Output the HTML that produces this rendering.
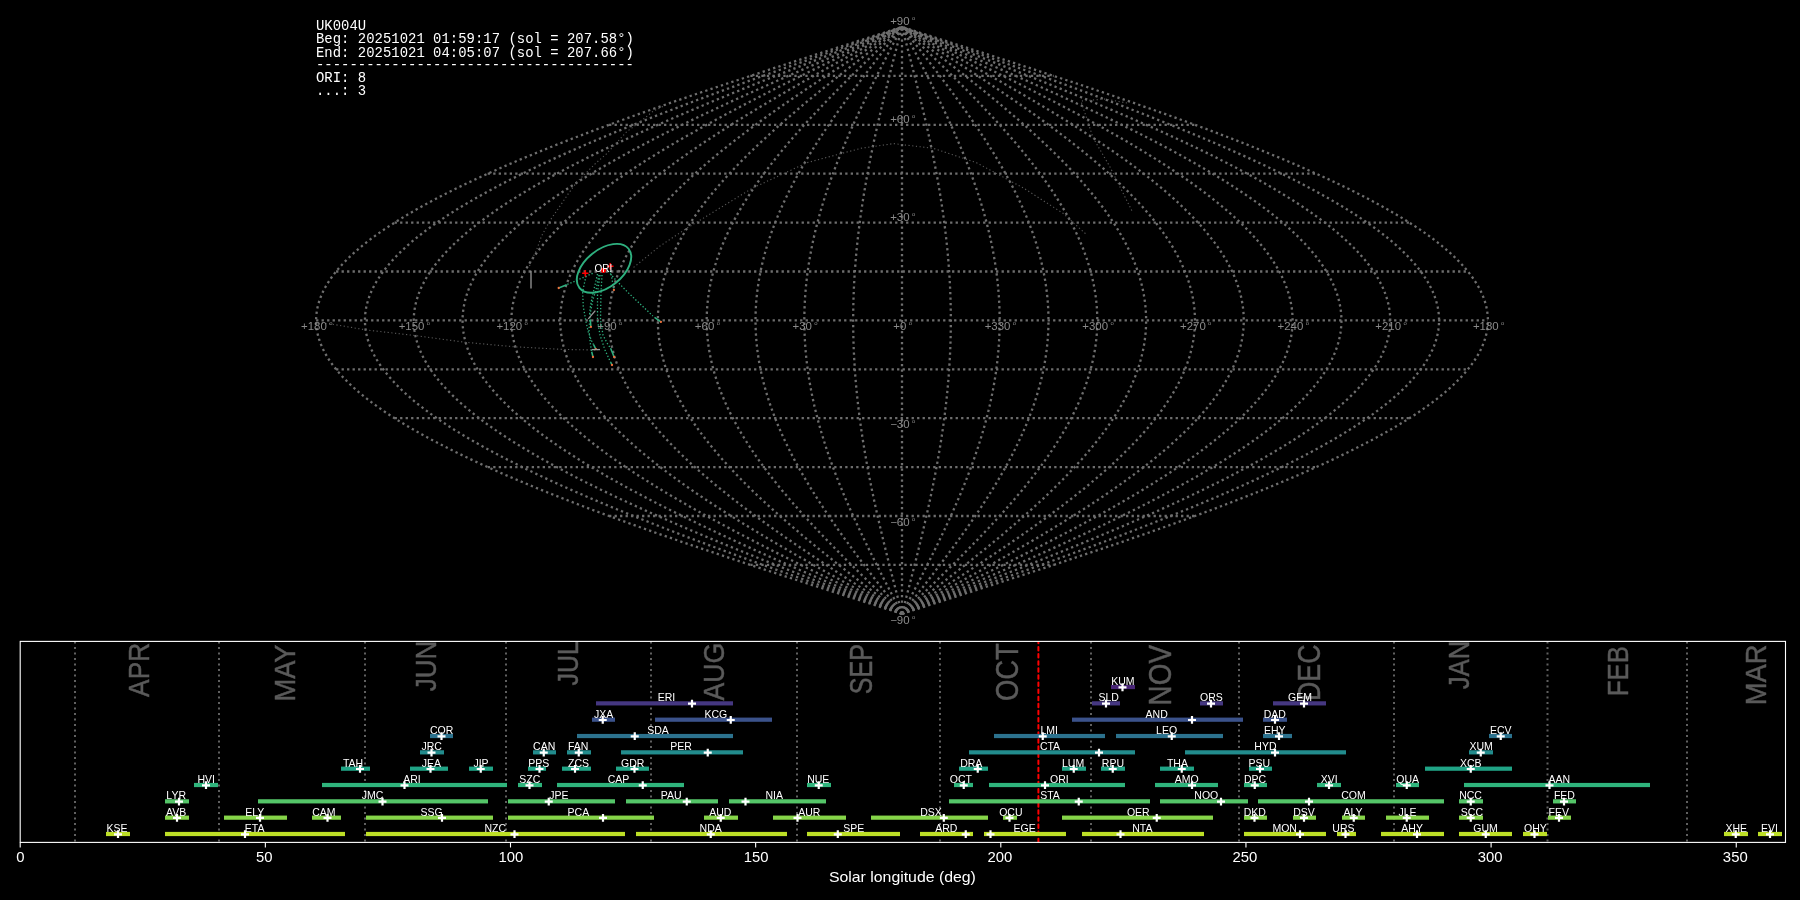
<!DOCTYPE html>
<html><head><meta charset="utf-8"><style>
html,body{margin:0;padding:0;background:#000;width:1800px;height:900px;overflow:hidden}
svg{display:block;will-change:transform}
text{font-family:"Liberation Sans",sans-serif}
.mono{font-family:"Liberation Mono",monospace}
</style></head><body>
<svg width="1800" height="900" viewBox="0 0 1800 900">
<rect width="1800" height="900" fill="#000"/>
<path d="M750.36 564.90H1053.64M609.05 516.00H1194.95M487.71 467.10H1316.29M394.60 418.20H1409.40M336.06 369.30H1467.94M316.10 320.40H1487.90M336.06 271.50H1467.94M394.60 222.60H1409.40M487.71 173.70H1316.29M609.05 124.80H1194.95M750.36 75.90H1053.64" stroke="#6e6e6e" stroke-width="2.3" stroke-dasharray="2.3 3.2" fill="none"/>
<path d="M902.00 613.80 L912.23 610.54 L922.45 607.28 L932.66 604.02 L942.87 600.76 L953.06 597.50 L963.24 594.24 L973.40 590.98 L983.54 587.72 L993.65 584.46 L1003.74 581.20 L1013.79 577.94 L1023.82 574.68 L1033.80 571.42 L1043.74 568.16 L1053.64 564.90 L1063.50 561.64 L1073.30 558.38 L1083.05 555.12 L1092.75 551.86 L1102.39 548.60 L1111.97 545.34 L1121.48 542.08 L1130.93 538.82 L1140.31 535.56 L1149.61 532.30 L1158.84 529.04 L1167.99 525.78 L1177.06 522.52 L1186.05 519.26 L1194.95 516.00 L1203.76 512.74 L1212.48 509.48 L1221.10 506.22 L1229.63 502.96 L1238.06 499.70 L1246.38 496.44 L1254.60 493.18 L1262.72 489.92 L1270.72 486.66 L1278.61 483.40 L1286.38 480.14 L1294.04 476.88 L1301.58 473.62 L1309.00 470.36 L1316.29 467.10 L1323.46 463.84 L1330.50 460.58 L1337.41 457.32 L1344.18 454.06 L1350.83 450.80 L1357.33 447.54 L1363.70 444.28 L1369.92 441.02 L1376.00 437.76 L1381.94 434.50 L1387.73 431.24 L1393.38 427.98 L1398.87 424.72 L1404.21 421.46 L1409.40 418.20 L1414.44 414.94 L1419.32 411.68 L1424.04 408.42 L1428.60 405.16 L1433.01 401.90 L1437.25 398.64 L1441.32 395.38 L1445.24 392.12 L1448.98 388.86 L1452.57 385.60 L1455.98 382.34 L1459.22 379.08 L1462.30 375.82 L1465.20 372.56 L1467.94 369.30 L1470.50 366.04 L1472.88 362.78 L1475.10 359.52 L1477.14 356.26 L1479.00 353.00 L1480.69 349.74 L1482.20 346.48 L1483.53 343.22 L1484.69 339.96 L1485.67 336.70 L1486.47 333.44 L1487.10 330.18 L1487.54 326.92 L1487.81 323.66 L1487.90 320.40 L1487.81 317.14 L1487.54 313.88 L1487.10 310.62 L1486.47 307.36 L1485.67 304.10 L1484.69 300.84 L1483.53 297.58 L1482.20 294.32 L1480.69 291.06 L1479.00 287.80 L1477.14 284.54 L1475.10 281.28 L1472.88 278.02 L1470.50 274.76 L1467.94 271.50 L1465.20 268.24 L1462.30 264.98 L1459.22 261.72 L1455.98 258.46 L1452.57 255.20 L1448.98 251.94 L1445.24 248.68 L1441.32 245.42 L1437.25 242.16 L1433.01 238.90 L1428.60 235.64 L1424.04 232.38 L1419.32 229.12 L1414.44 225.86 L1409.40 222.60 L1404.21 219.34 L1398.87 216.08 L1393.38 212.82 L1387.73 209.56 L1381.94 206.30 L1376.00 203.04 L1369.92 199.78 L1363.70 196.52 L1357.33 193.26 L1350.83 190.00 L1344.18 186.74 L1337.41 183.48 L1330.50 180.22 L1323.46 176.96 L1316.29 173.70 L1309.00 170.44 L1301.58 167.18 L1294.04 163.92 L1286.38 160.66 L1278.61 157.40 L1270.72 154.14 L1262.72 150.88 L1254.60 147.62 L1246.38 144.36 L1238.06 141.10 L1229.63 137.84 L1221.10 134.58 L1212.48 131.32 L1203.76 128.06 L1194.95 124.80 L1186.05 121.54 L1177.06 118.28 L1167.99 115.02 L1158.84 111.76 L1149.61 108.50 L1140.31 105.24 L1130.93 101.98 L1121.48 98.72 L1111.97 95.46 L1102.39 92.20 L1092.75 88.94 L1083.05 85.68 L1073.30 82.42 L1063.50 79.16 L1053.64 75.90 L1043.74 72.64 L1033.80 69.38 L1023.82 66.12 L1013.79 62.86 L1003.74 59.60 L993.65 56.34 L983.54 53.08 L973.40 49.82 L963.24 46.56 L953.06 43.30 L942.87 40.04 L932.66 36.78 L922.45 33.52 L912.23 30.26 L902.00 27.00" stroke="#6e6e6e" stroke-width="2.3" stroke-dasharray="2.3 3.2" fill="none"/>
<path d="M902.00 613.80 L911.37 610.54 L920.74 607.28 L930.11 604.02 L939.46 600.76 L948.81 597.50 L958.14 594.24 L967.45 590.98 L976.75 587.72 L986.02 584.46 L995.26 581.20 L1004.48 577.94 L1013.66 574.68 L1022.82 571.42 L1031.93 568.16 L1041.01 564.90 L1050.04 561.64 L1059.03 558.38 L1067.97 555.12 L1076.85 551.86 L1085.69 548.60 L1094.47 545.34 L1103.19 542.08 L1111.85 538.82 L1120.45 535.56 L1128.98 532.30 L1137.44 529.04 L1145.83 525.78 L1154.14 522.52 L1162.38 519.26 L1170.54 516.00 L1178.61 512.74 L1186.61 509.48 L1194.51 506.22 L1202.33 502.96 L1210.05 499.70 L1217.68 496.44 L1225.22 493.18 L1232.66 489.92 L1239.99 486.66 L1247.23 483.40 L1254.35 480.14 L1261.37 476.88 L1268.28 473.62 L1275.08 470.36 L1281.77 467.10 L1288.34 463.84 L1294.79 460.58 L1301.12 457.32 L1307.34 454.06 L1313.42 450.80 L1319.39 447.54 L1325.22 444.28 L1330.93 441.02 L1336.50 437.76 L1341.95 434.50 L1347.26 431.24 L1352.43 427.98 L1357.47 424.72 L1362.36 421.46 L1367.12 418.20 L1371.74 414.94 L1376.21 411.68 L1380.54 408.42 L1384.72 405.16 L1388.76 401.90 L1392.64 398.64 L1396.38 395.38 L1399.97 392.12 L1403.40 388.86 L1406.69 385.60 L1409.81 382.34 L1412.79 379.08 L1415.61 375.82 L1418.27 372.56 L1420.77 369.30 L1423.12 366.04 L1425.31 362.78 L1427.34 359.52 L1429.21 356.26 L1430.92 353.00 L1432.46 349.74 L1433.85 346.48 L1435.07 343.22 L1436.13 339.96 L1437.03 336.70 L1437.77 333.44 L1438.34 330.18 L1438.75 326.92 L1438.99 323.66 L1439.07 320.40 L1438.99 317.14 L1438.75 313.88 L1438.34 310.62 L1437.77 307.36 L1437.03 304.10 L1436.13 300.84 L1435.07 297.58 L1433.85 294.32 L1432.46 291.06 L1430.92 287.80 L1429.21 284.54 L1427.34 281.28 L1425.31 278.02 L1423.12 274.76 L1420.77 271.50 L1418.27 268.24 L1415.61 264.98 L1412.79 261.72 L1409.81 258.46 L1406.69 255.20 L1403.40 251.94 L1399.97 248.68 L1396.38 245.42 L1392.64 242.16 L1388.76 238.90 L1384.72 235.64 L1380.54 232.38 L1376.21 229.12 L1371.74 225.86 L1367.12 222.60 L1362.36 219.34 L1357.47 216.08 L1352.43 212.82 L1347.26 209.56 L1341.95 206.30 L1336.50 203.04 L1330.93 199.78 L1325.22 196.52 L1319.39 193.26 L1313.42 190.00 L1307.34 186.74 L1301.12 183.48 L1294.79 180.22 L1288.34 176.96 L1281.77 173.70 L1275.08 170.44 L1268.28 167.18 L1261.37 163.92 L1254.35 160.66 L1247.23 157.40 L1239.99 154.14 L1232.66 150.88 L1225.22 147.62 L1217.68 144.36 L1210.05 141.10 L1202.33 137.84 L1194.51 134.58 L1186.61 131.32 L1178.61 128.06 L1170.54 124.80 L1162.38 121.54 L1154.14 118.28 L1145.83 115.02 L1137.44 111.76 L1128.98 108.50 L1120.45 105.24 L1111.85 101.98 L1103.19 98.72 L1094.47 95.46 L1085.69 92.20 L1076.85 88.94 L1067.97 85.68 L1059.03 82.42 L1050.04 79.16 L1041.01 75.90 L1031.93 72.64 L1022.82 69.38 L1013.66 66.12 L1004.48 62.86 L995.26 59.60 L986.02 56.34 L976.75 53.08 L967.45 49.82 L958.14 46.56 L948.81 43.30 L939.46 40.04 L930.11 36.78 L920.74 33.52 L911.37 30.26 L902.00 27.00" stroke="#6e6e6e" stroke-width="2.3" stroke-dasharray="2.3 3.2" fill="none"/>
<path d="M902.00 613.80 L910.52 610.54 L919.04 607.28 L927.55 604.02 L936.06 600.76 L944.55 597.50 L953.04 594.24 L961.50 590.98 L969.95 587.72 L978.38 584.46 L986.78 581.20 L995.16 577.94 L1003.51 574.68 L1011.83 571.42 L1020.12 568.16 L1028.37 564.90 L1036.58 561.64 L1044.75 558.38 L1052.88 555.12 L1060.96 551.86 L1068.99 548.60 L1076.97 545.34 L1084.90 542.08 L1092.77 538.82 L1100.59 535.56 L1108.34 532.30 L1116.03 529.04 L1123.66 525.78 L1131.22 522.52 L1138.71 519.26 L1146.12 516.00 L1153.47 512.74 L1160.73 509.48 L1167.92 506.22 L1175.03 502.96 L1182.05 499.70 L1188.99 496.44 L1195.84 493.18 L1202.60 489.92 L1209.27 486.66 L1215.84 483.40 L1222.32 480.14 L1228.70 476.88 L1234.99 473.62 L1241.17 470.36 L1247.24 467.10 L1253.22 463.84 L1259.08 460.58 L1264.84 457.32 L1270.49 454.06 L1276.02 450.80 L1281.44 447.54 L1286.75 444.28 L1291.93 441.02 L1297.00 437.76 L1301.95 434.50 L1306.78 431.24 L1311.48 427.98 L1316.06 424.72 L1320.51 421.46 L1324.84 418.20 L1329.03 414.94 L1333.10 411.68 L1337.03 408.42 L1340.84 405.16 L1344.50 401.90 L1348.04 398.64 L1351.44 395.38 L1354.70 392.12 L1357.82 388.86 L1360.80 385.60 L1363.65 382.34 L1366.35 379.08 L1368.92 375.82 L1371.34 372.56 L1373.61 369.30 L1375.75 366.04 L1377.74 362.78 L1379.58 359.52 L1381.28 356.26 L1382.83 353.00 L1384.24 349.74 L1385.50 346.48 L1386.61 343.22 L1387.58 339.96 L1388.39 336.70 L1389.06 333.44 L1389.58 330.18 L1389.95 326.92 L1390.18 323.66 L1390.25 320.40 L1390.18 317.14 L1389.95 313.88 L1389.58 310.62 L1389.06 307.36 L1388.39 304.10 L1387.58 300.84 L1386.61 297.58 L1385.50 294.32 L1384.24 291.06 L1382.83 287.80 L1381.28 284.54 L1379.58 281.28 L1377.74 278.02 L1375.75 274.76 L1373.61 271.50 L1371.34 268.24 L1368.92 264.98 L1366.35 261.72 L1363.65 258.46 L1360.80 255.20 L1357.82 251.94 L1354.70 248.68 L1351.44 245.42 L1348.04 242.16 L1344.50 238.90 L1340.84 235.64 L1337.03 232.38 L1333.10 229.12 L1329.03 225.86 L1324.84 222.60 L1320.51 219.34 L1316.06 216.08 L1311.48 212.82 L1306.78 209.56 L1301.95 206.30 L1297.00 203.04 L1291.93 199.78 L1286.75 196.52 L1281.44 193.26 L1276.02 190.00 L1270.49 186.74 L1264.84 183.48 L1259.08 180.22 L1253.22 176.96 L1247.24 173.70 L1241.17 170.44 L1234.99 167.18 L1228.70 163.92 L1222.32 160.66 L1215.84 157.40 L1209.27 154.14 L1202.60 150.88 L1195.84 147.62 L1188.99 144.36 L1182.05 141.10 L1175.03 137.84 L1167.92 134.58 L1160.73 131.32 L1153.47 128.06 L1146.12 124.80 L1138.71 121.54 L1131.22 118.28 L1123.66 115.02 L1116.03 111.76 L1108.34 108.50 L1100.59 105.24 L1092.77 101.98 L1084.90 98.72 L1076.97 95.46 L1068.99 92.20 L1060.96 88.94 L1052.88 85.68 L1044.75 82.42 L1036.58 79.16 L1028.37 75.90 L1020.12 72.64 L1011.83 69.38 L1003.51 66.12 L995.16 62.86 L986.78 59.60 L978.38 56.34 L969.95 53.08 L961.50 49.82 L953.04 46.56 L944.55 43.30 L936.06 40.04 L927.55 36.78 L919.04 33.52 L910.52 30.26 L902.00 27.00" stroke="#6e6e6e" stroke-width="2.3" stroke-dasharray="2.3 3.2" fill="none"/>
<path d="M902.00 613.80 L909.67 610.54 L917.34 607.28 L925.00 604.02 L932.65 600.76 L940.30 597.50 L947.93 594.24 L955.55 590.98 L963.16 587.72 L970.74 584.46 L978.31 581.20 L985.85 577.94 L993.36 574.68 L1000.85 571.42 L1008.31 568.16 L1015.73 564.90 L1023.12 561.64 L1030.48 558.38 L1037.79 555.12 L1045.06 551.86 L1052.29 548.60 L1059.48 545.34 L1066.61 542.08 L1073.70 538.82 L1080.73 535.56 L1087.71 532.30 L1094.63 529.04 L1101.49 525.78 L1108.30 522.52 L1115.04 519.26 L1121.71 516.00 L1128.32 512.74 L1134.86 509.48 L1141.33 506.22 L1147.72 502.96 L1154.04 499.70 L1160.29 496.44 L1166.45 493.18 L1172.54 489.92 L1178.54 486.66 L1184.46 483.40 L1190.29 480.14 L1196.03 476.88 L1201.69 473.62 L1207.25 470.36 L1212.72 467.10 L1218.10 463.84 L1223.38 460.58 L1228.56 457.32 L1233.64 454.06 L1238.62 450.80 L1243.50 447.54 L1248.27 444.28 L1252.94 441.02 L1257.50 437.76 L1261.96 434.50 L1266.30 431.24 L1270.53 427.98 L1274.65 424.72 L1278.66 421.46 L1282.55 418.20 L1286.33 414.94 L1289.99 411.68 L1293.53 408.42 L1296.95 405.16 L1300.25 401.90 L1303.43 398.64 L1306.49 395.38 L1309.43 392.12 L1312.24 388.86 L1314.92 385.60 L1317.48 382.34 L1319.92 379.08 L1322.22 375.82 L1324.40 372.56 L1326.45 369.30 L1328.37 366.04 L1330.16 362.78 L1331.82 359.52 L1333.35 356.26 L1334.75 353.00 L1336.01 349.74 L1337.15 346.48 L1338.15 343.22 L1339.02 339.96 L1339.75 336.70 L1340.35 333.44 L1340.82 330.18 L1341.16 326.92 L1341.36 323.66 L1341.42 320.40 L1341.36 317.14 L1341.16 313.88 L1340.82 310.62 L1340.35 307.36 L1339.75 304.10 L1339.02 300.84 L1338.15 297.58 L1337.15 294.32 L1336.01 291.06 L1334.75 287.80 L1333.35 284.54 L1331.82 281.28 L1330.16 278.02 L1328.37 274.76 L1326.45 271.50 L1324.40 268.24 L1322.22 264.98 L1319.92 261.72 L1317.48 258.46 L1314.92 255.20 L1312.24 251.94 L1309.43 248.68 L1306.49 245.42 L1303.43 242.16 L1300.25 238.90 L1296.95 235.64 L1293.53 232.38 L1289.99 229.12 L1286.33 225.86 L1282.55 222.60 L1278.66 219.34 L1274.65 216.08 L1270.53 212.82 L1266.30 209.56 L1261.96 206.30 L1257.50 203.04 L1252.94 199.78 L1248.27 196.52 L1243.50 193.26 L1238.62 190.00 L1233.64 186.74 L1228.56 183.48 L1223.38 180.22 L1218.10 176.96 L1212.72 173.70 L1207.25 170.44 L1201.69 167.18 L1196.03 163.92 L1190.29 160.66 L1184.46 157.40 L1178.54 154.14 L1172.54 150.88 L1166.45 147.62 L1160.29 144.36 L1154.04 141.10 L1147.72 137.84 L1141.33 134.58 L1134.86 131.32 L1128.32 128.06 L1121.71 124.80 L1115.04 121.54 L1108.30 118.28 L1101.49 115.02 L1094.63 111.76 L1087.71 108.50 L1080.73 105.24 L1073.70 101.98 L1066.61 98.72 L1059.48 95.46 L1052.29 92.20 L1045.06 88.94 L1037.79 85.68 L1030.48 82.42 L1023.12 79.16 L1015.73 75.90 L1008.31 72.64 L1000.85 69.38 L993.36 66.12 L985.85 62.86 L978.31 59.60 L970.74 56.34 L963.16 53.08 L955.55 49.82 L947.93 46.56 L940.30 43.30 L932.65 40.04 L925.00 36.78 L917.34 33.52 L909.67 30.26 L902.00 27.00" stroke="#6e6e6e" stroke-width="2.3" stroke-dasharray="2.3 3.2" fill="none"/>
<path d="M902.00 613.80 L908.82 610.54 L915.63 607.28 L922.44 604.02 L929.25 600.76 L936.04 597.50 L942.83 594.24 L949.60 590.98 L956.36 587.72 L963.10 584.46 L969.83 581.20 L976.53 577.94 L983.21 574.68 L989.87 571.42 L996.49 568.16 L1003.09 564.90 L1009.66 561.64 L1016.20 558.38 L1022.70 555.12 L1029.17 551.86 L1035.59 548.60 L1041.98 545.34 L1048.32 542.08 L1054.62 538.82 L1060.87 535.56 L1067.07 532.30 L1073.23 529.04 L1079.33 525.78 L1085.38 522.52 L1091.37 519.26 L1097.30 516.00 L1103.17 512.74 L1108.99 509.48 L1114.74 506.22 L1120.42 502.96 L1126.04 499.70 L1131.59 496.44 L1137.07 493.18 L1142.48 489.92 L1147.81 486.66 L1153.07 483.40 L1158.26 480.14 L1163.36 476.88 L1168.39 473.62 L1173.33 470.36 L1178.20 467.10 L1182.97 463.84 L1187.67 460.58 L1192.27 457.32 L1196.79 454.06 L1201.22 450.80 L1205.55 447.54 L1209.80 444.28 L1213.95 441.02 L1218.00 437.76 L1221.96 434.50 L1225.82 431.24 L1229.58 427.98 L1233.25 424.72 L1236.81 421.46 L1240.27 418.20 L1243.63 414.94 L1246.88 411.68 L1250.03 408.42 L1253.07 405.16 L1256.00 401.90 L1258.83 398.64 L1261.55 395.38 L1264.16 392.12 L1266.66 388.86 L1269.04 385.60 L1271.32 382.34 L1273.48 379.08 L1275.53 375.82 L1277.47 372.56 L1279.29 369.30 L1281.00 366.04 L1282.59 362.78 L1284.06 359.52 L1285.42 356.26 L1286.67 353.00 L1287.79 349.74 L1288.80 346.48 L1289.69 343.22 L1290.46 339.96 L1291.11 336.70 L1291.65 333.44 L1292.06 330.18 L1292.36 326.92 L1292.54 323.66 L1292.60 320.40 L1292.54 317.14 L1292.36 313.88 L1292.06 310.62 L1291.65 307.36 L1291.11 304.10 L1290.46 300.84 L1289.69 297.58 L1288.80 294.32 L1287.79 291.06 L1286.67 287.80 L1285.42 284.54 L1284.06 281.28 L1282.59 278.02 L1281.00 274.76 L1279.29 271.50 L1277.47 268.24 L1275.53 264.98 L1273.48 261.72 L1271.32 258.46 L1269.04 255.20 L1266.66 251.94 L1264.16 248.68 L1261.55 245.42 L1258.83 242.16 L1256.00 238.90 L1253.07 235.64 L1250.03 232.38 L1246.88 229.12 L1243.63 225.86 L1240.27 222.60 L1236.81 219.34 L1233.25 216.08 L1229.58 212.82 L1225.82 209.56 L1221.96 206.30 L1218.00 203.04 L1213.95 199.78 L1209.80 196.52 L1205.55 193.26 L1201.22 190.00 L1196.79 186.74 L1192.27 183.48 L1187.67 180.22 L1182.97 176.96 L1178.20 173.70 L1173.33 170.44 L1168.39 167.18 L1163.36 163.92 L1158.26 160.66 L1153.07 157.40 L1147.81 154.14 L1142.48 150.88 L1137.07 147.62 L1131.59 144.36 L1126.04 141.10 L1120.42 137.84 L1114.74 134.58 L1108.99 131.32 L1103.17 128.06 L1097.30 124.80 L1091.37 121.54 L1085.38 118.28 L1079.33 115.02 L1073.23 111.76 L1067.07 108.50 L1060.87 105.24 L1054.62 101.98 L1048.32 98.72 L1041.98 95.46 L1035.59 92.20 L1029.17 88.94 L1022.70 85.68 L1016.20 82.42 L1009.66 79.16 L1003.09 75.90 L996.49 72.64 L989.87 69.38 L983.21 66.12 L976.53 62.86 L969.83 59.60 L963.10 56.34 L956.36 53.08 L949.60 49.82 L942.83 46.56 L936.04 43.30 L929.25 40.04 L922.44 36.78 L915.63 33.52 L908.82 30.26 L902.00 27.00" stroke="#6e6e6e" stroke-width="2.3" stroke-dasharray="2.3 3.2" fill="none"/>
<path d="M902.00 613.80 L907.96 610.54 L913.93 607.28 L919.89 604.02 L925.84 600.76 L931.79 597.50 L937.73 594.24 L943.65 590.98 L949.57 587.72 L955.47 584.46 L961.35 581.20 L967.21 577.94 L973.06 574.68 L978.88 571.42 L984.68 568.16 L990.46 564.90 L996.21 561.64 L1001.93 558.38 L1007.61 555.12 L1013.27 551.86 L1018.89 548.60 L1024.48 545.34 L1030.03 542.08 L1035.54 538.82 L1041.01 535.56 L1046.44 532.30 L1051.82 529.04 L1057.16 525.78 L1062.45 522.52 L1067.70 519.26 L1072.89 516.00 L1078.03 512.74 L1083.11 509.48 L1088.14 506.22 L1093.12 502.96 L1098.03 499.70 L1102.89 496.44 L1107.69 493.18 L1112.42 489.92 L1117.09 486.66 L1121.69 483.40 L1126.22 480.14 L1130.69 476.88 L1135.09 473.62 L1139.42 470.36 L1143.67 467.10 L1147.85 463.84 L1151.96 460.58 L1155.99 457.32 L1159.94 454.06 L1163.81 450.80 L1167.61 447.54 L1171.32 444.28 L1174.95 441.02 L1178.50 437.76 L1181.97 434.50 L1185.34 431.24 L1188.64 427.98 L1191.84 424.72 L1194.96 421.46 L1197.99 418.20 L1200.92 414.94 L1203.77 411.68 L1206.52 408.42 L1209.19 405.16 L1211.75 401.90 L1214.23 398.64 L1216.61 395.38 L1218.89 392.12 L1221.07 388.86 L1223.16 385.60 L1225.15 382.34 L1227.05 379.08 L1228.84 375.82 L1230.54 372.56 L1232.13 369.30 L1233.62 366.04 L1235.02 362.78 L1236.31 359.52 L1237.50 356.26 L1238.58 353.00 L1239.57 349.74 L1240.45 346.48 L1241.23 343.22 L1241.90 339.96 L1242.47 336.70 L1242.94 333.44 L1243.31 330.18 L1243.57 326.92 L1243.72 323.66 L1243.78 320.40 L1243.72 317.14 L1243.57 313.88 L1243.31 310.62 L1242.94 307.36 L1242.47 304.10 L1241.90 300.84 L1241.23 297.58 L1240.45 294.32 L1239.57 291.06 L1238.58 287.80 L1237.50 284.54 L1236.31 281.28 L1235.02 278.02 L1233.62 274.76 L1232.13 271.50 L1230.54 268.24 L1228.84 264.98 L1227.05 261.72 L1225.15 258.46 L1223.16 255.20 L1221.07 251.94 L1218.89 248.68 L1216.61 245.42 L1214.23 242.16 L1211.75 238.90 L1209.19 235.64 L1206.52 232.38 L1203.77 229.12 L1200.92 225.86 L1197.99 222.60 L1194.96 219.34 L1191.84 216.08 L1188.64 212.82 L1185.34 209.56 L1181.97 206.30 L1178.50 203.04 L1174.95 199.78 L1171.32 196.52 L1167.61 193.26 L1163.81 190.00 L1159.94 186.74 L1155.99 183.48 L1151.96 180.22 L1147.85 176.96 L1143.67 173.70 L1139.42 170.44 L1135.09 167.18 L1130.69 163.92 L1126.22 160.66 L1121.69 157.40 L1117.09 154.14 L1112.42 150.88 L1107.69 147.62 L1102.89 144.36 L1098.03 141.10 L1093.12 137.84 L1088.14 134.58 L1083.11 131.32 L1078.03 128.06 L1072.89 124.80 L1067.70 121.54 L1062.45 118.28 L1057.16 115.02 L1051.82 111.76 L1046.44 108.50 L1041.01 105.24 L1035.54 101.98 L1030.03 98.72 L1024.48 95.46 L1018.89 92.20 L1013.27 88.94 L1007.61 85.68 L1001.93 82.42 L996.21 79.16 L990.46 75.90 L984.68 72.64 L978.88 69.38 L973.06 66.12 L967.21 62.86 L961.35 59.60 L955.47 56.34 L949.57 53.08 L943.65 49.82 L937.73 46.56 L931.79 43.30 L925.84 40.04 L919.89 36.78 L913.93 33.52 L907.96 30.26 L902.00 27.00" stroke="#6e6e6e" stroke-width="2.3" stroke-dasharray="2.3 3.2" fill="none"/>
<path d="M902.00 613.80 L907.11 610.54 L912.22 607.28 L917.33 604.02 L922.44 600.76 L927.53 597.50 L932.62 594.24 L937.70 590.98 L942.77 587.72 L947.83 584.46 L952.87 581.20 L957.90 577.94 L962.91 574.68 L967.90 571.42 L972.87 568.16 L977.82 564.90 L982.75 561.64 L987.65 558.38 L992.53 555.12 L997.38 551.86 L1002.19 548.60 L1006.98 545.34 L1011.74 542.08 L1016.46 538.82 L1021.15 535.56 L1025.81 532.30 L1030.42 529.04 L1035.00 525.78 L1039.53 522.52 L1044.02 519.26 L1048.47 516.00 L1052.88 512.74 L1057.24 509.48 L1061.55 506.22 L1065.82 502.96 L1070.03 499.70 L1074.19 496.44 L1078.30 493.18 L1082.36 489.92 L1086.36 486.66 L1090.30 483.40 L1094.19 480.14 L1098.02 476.88 L1101.79 473.62 L1105.50 470.36 L1109.15 467.10 L1112.73 463.84 L1116.25 460.58 L1119.70 457.32 L1123.09 454.06 L1126.41 450.80 L1129.66 447.54 L1132.85 444.28 L1135.96 441.02 L1139.00 437.76 L1141.97 434.50 L1144.87 431.24 L1147.69 427.98 L1150.44 424.72 L1153.11 421.46 L1155.70 418.20 L1158.22 414.94 L1160.66 411.68 L1163.02 408.42 L1165.30 405.16 L1167.50 401.90 L1169.62 398.64 L1171.66 395.38 L1173.62 392.12 L1175.49 388.86 L1177.28 385.60 L1178.99 382.34 L1180.61 379.08 L1182.15 375.82 L1183.60 372.56 L1184.97 369.30 L1186.25 366.04 L1187.44 362.78 L1188.55 359.52 L1189.57 356.26 L1190.50 353.00 L1191.34 349.74 L1192.10 346.48 L1192.77 343.22 L1193.35 339.96 L1193.84 336.70 L1194.24 333.44 L1194.55 330.18 L1194.77 326.92 L1194.91 323.66 L1194.95 320.40 L1194.91 317.14 L1194.77 313.88 L1194.55 310.62 L1194.24 307.36 L1193.84 304.10 L1193.35 300.84 L1192.77 297.58 L1192.10 294.32 L1191.34 291.06 L1190.50 287.80 L1189.57 284.54 L1188.55 281.28 L1187.44 278.02 L1186.25 274.76 L1184.97 271.50 L1183.60 268.24 L1182.15 264.98 L1180.61 261.72 L1178.99 258.46 L1177.28 255.20 L1175.49 251.94 L1173.62 248.68 L1171.66 245.42 L1169.62 242.16 L1167.50 238.90 L1165.30 235.64 L1163.02 232.38 L1160.66 229.12 L1158.22 225.86 L1155.70 222.60 L1153.11 219.34 L1150.44 216.08 L1147.69 212.82 L1144.87 209.56 L1141.97 206.30 L1139.00 203.04 L1135.96 199.78 L1132.85 196.52 L1129.66 193.26 L1126.41 190.00 L1123.09 186.74 L1119.70 183.48 L1116.25 180.22 L1112.73 176.96 L1109.15 173.70 L1105.50 170.44 L1101.79 167.18 L1098.02 163.92 L1094.19 160.66 L1090.30 157.40 L1086.36 154.14 L1082.36 150.88 L1078.30 147.62 L1074.19 144.36 L1070.03 141.10 L1065.82 137.84 L1061.55 134.58 L1057.24 131.32 L1052.88 128.06 L1048.47 124.80 L1044.02 121.54 L1039.53 118.28 L1035.00 115.02 L1030.42 111.76 L1025.81 108.50 L1021.15 105.24 L1016.46 101.98 L1011.74 98.72 L1006.98 95.46 L1002.19 92.20 L997.38 88.94 L992.53 85.68 L987.65 82.42 L982.75 79.16 L977.82 75.90 L972.87 72.64 L967.90 69.38 L962.91 66.12 L957.90 62.86 L952.87 59.60 L947.83 56.34 L942.77 53.08 L937.70 49.82 L932.62 46.56 L927.53 43.30 L922.44 40.04 L917.33 36.78 L912.22 33.52 L907.11 30.26 L902.00 27.00" stroke="#6e6e6e" stroke-width="2.3" stroke-dasharray="2.3 3.2" fill="none"/>
<path d="M902.00 613.80 L906.26 610.54 L910.52 607.28 L914.78 604.02 L919.03 600.76 L923.28 597.50 L927.52 594.24 L931.75 590.98 L935.98 587.72 L940.19 584.46 L944.39 581.20 L948.58 577.94 L952.76 574.68 L956.92 571.42 L961.06 568.16 L965.18 564.90 L969.29 561.64 L973.38 558.38 L977.44 555.12 L981.48 551.86 L985.50 548.60 L989.49 545.34 L993.45 542.08 L997.39 538.82 L1001.29 535.56 L1005.17 532.30 L1009.02 529.04 L1012.83 525.78 L1016.61 522.52 L1020.35 519.26 L1024.06 516.00 L1027.73 512.74 L1031.37 509.48 L1034.96 506.22 L1038.51 502.96 L1042.02 499.70 L1045.49 496.44 L1048.92 493.18 L1052.30 489.92 L1055.63 486.66 L1058.92 483.40 L1062.16 480.14 L1065.35 476.88 L1068.49 473.62 L1071.58 470.36 L1074.62 467.10 L1077.61 463.84 L1080.54 460.58 L1083.42 457.32 L1086.24 454.06 L1089.01 450.80 L1091.72 447.54 L1094.37 444.28 L1096.97 441.02 L1099.50 437.76 L1101.98 434.50 L1104.39 431.24 L1106.74 427.98 L1109.03 424.72 L1111.26 421.46 L1113.42 418.20 L1115.52 414.94 L1117.55 411.68 L1119.52 408.42 L1121.42 405.16 L1123.25 401.90 L1125.02 398.64 L1126.72 395.38 L1128.35 392.12 L1129.91 388.86 L1131.40 385.60 L1132.82 382.34 L1134.18 379.08 L1135.46 375.82 L1136.67 372.56 L1137.81 369.30 L1138.87 366.04 L1139.87 362.78 L1140.79 359.52 L1141.64 356.26 L1142.42 353.00 L1143.12 349.74 L1143.75 346.48 L1144.31 343.22 L1144.79 339.96 L1145.20 336.70 L1145.53 333.44 L1145.79 330.18 L1145.98 326.92 L1146.09 323.66 L1146.12 320.40 L1146.09 317.14 L1145.98 313.88 L1145.79 310.62 L1145.53 307.36 L1145.20 304.10 L1144.79 300.84 L1144.31 297.58 L1143.75 294.32 L1143.12 291.06 L1142.42 287.80 L1141.64 284.54 L1140.79 281.28 L1139.87 278.02 L1138.87 274.76 L1137.81 271.50 L1136.67 268.24 L1135.46 264.98 L1134.18 261.72 L1132.82 258.46 L1131.40 255.20 L1129.91 251.94 L1128.35 248.68 L1126.72 245.42 L1125.02 242.16 L1123.25 238.90 L1121.42 235.64 L1119.52 232.38 L1117.55 229.12 L1115.52 225.86 L1113.42 222.60 L1111.26 219.34 L1109.03 216.08 L1106.74 212.82 L1104.39 209.56 L1101.98 206.30 L1099.50 203.04 L1096.97 199.78 L1094.37 196.52 L1091.72 193.26 L1089.01 190.00 L1086.24 186.74 L1083.42 183.48 L1080.54 180.22 L1077.61 176.96 L1074.62 173.70 L1071.58 170.44 L1068.49 167.18 L1065.35 163.92 L1062.16 160.66 L1058.92 157.40 L1055.63 154.14 L1052.30 150.88 L1048.92 147.62 L1045.49 144.36 L1042.02 141.10 L1038.51 137.84 L1034.96 134.58 L1031.37 131.32 L1027.73 128.06 L1024.06 124.80 L1020.35 121.54 L1016.61 118.28 L1012.83 115.02 L1009.02 111.76 L1005.17 108.50 L1001.29 105.24 L997.39 101.98 L993.45 98.72 L989.49 95.46 L985.50 92.20 L981.48 88.94 L977.44 85.68 L973.38 82.42 L969.29 79.16 L965.18 75.90 L961.06 72.64 L956.92 69.38 L952.76 66.12 L948.58 62.86 L944.39 59.60 L940.19 56.34 L935.98 53.08 L931.75 49.82 L927.52 46.56 L923.28 43.30 L919.03 40.04 L914.78 36.78 L910.52 33.52 L906.26 30.26 L902.00 27.00" stroke="#6e6e6e" stroke-width="2.3" stroke-dasharray="2.3 3.2" fill="none"/>
<path d="M902.00 613.80 L905.41 610.54 L908.82 607.28 L912.22 604.02 L915.62 600.76 L919.02 597.50 L922.41 594.24 L925.80 590.98 L929.18 587.72 L932.55 584.46 L935.91 581.20 L939.26 577.94 L942.61 574.68 L945.93 571.42 L949.25 568.16 L952.55 564.90 L955.83 561.64 L959.10 558.38 L962.35 555.12 L965.58 551.86 L968.80 548.60 L971.99 545.34 L975.16 542.08 L978.31 538.82 L981.44 535.56 L984.54 532.30 L987.61 529.04 L990.66 525.78 L993.69 522.52 L996.68 519.26 L999.65 516.00 L1002.59 512.74 L1005.49 509.48 L1008.37 506.22 L1011.21 502.96 L1014.02 499.70 L1016.79 496.44 L1019.53 493.18 L1022.24 489.92 L1024.91 486.66 L1027.54 483.40 L1030.13 480.14 L1032.68 476.88 L1035.19 473.62 L1037.67 470.36 L1040.10 467.10 L1042.49 463.84 L1044.83 460.58 L1047.14 457.32 L1049.39 454.06 L1051.61 450.80 L1053.78 447.54 L1055.90 444.28 L1057.97 441.02 L1060.00 437.76 L1061.98 434.50 L1063.91 431.24 L1065.79 427.98 L1067.62 424.72 L1069.40 421.46 L1071.13 418.20 L1072.81 414.94 L1074.44 411.68 L1076.01 408.42 L1077.53 405.16 L1079.00 401.90 L1080.42 398.64 L1081.77 395.38 L1083.08 392.12 L1084.33 388.86 L1085.52 385.60 L1086.66 382.34 L1087.74 379.08 L1088.77 375.82 L1089.73 372.56 L1090.65 369.30 L1091.50 366.04 L1092.29 362.78 L1093.03 359.52 L1093.71 356.26 L1094.33 353.00 L1094.90 349.74 L1095.40 346.48 L1095.84 343.22 L1096.23 339.96 L1096.56 336.70 L1096.82 333.44 L1097.03 330.18 L1097.18 326.92 L1097.27 323.66 L1097.30 320.40 L1097.27 317.14 L1097.18 313.88 L1097.03 310.62 L1096.82 307.36 L1096.56 304.10 L1096.23 300.84 L1095.84 297.58 L1095.40 294.32 L1094.90 291.06 L1094.33 287.80 L1093.71 284.54 L1093.03 281.28 L1092.29 278.02 L1091.50 274.76 L1090.65 271.50 L1089.73 268.24 L1088.77 264.98 L1087.74 261.72 L1086.66 258.46 L1085.52 255.20 L1084.33 251.94 L1083.08 248.68 L1081.77 245.42 L1080.42 242.16 L1079.00 238.90 L1077.53 235.64 L1076.01 232.38 L1074.44 229.12 L1072.81 225.86 L1071.13 222.60 L1069.40 219.34 L1067.62 216.08 L1065.79 212.82 L1063.91 209.56 L1061.98 206.30 L1060.00 203.04 L1057.97 199.78 L1055.90 196.52 L1053.78 193.26 L1051.61 190.00 L1049.39 186.74 L1047.14 183.48 L1044.83 180.22 L1042.49 176.96 L1040.10 173.70 L1037.67 170.44 L1035.19 167.18 L1032.68 163.92 L1030.13 160.66 L1027.54 157.40 L1024.91 154.14 L1022.24 150.88 L1019.53 147.62 L1016.79 144.36 L1014.02 141.10 L1011.21 137.84 L1008.37 134.58 L1005.49 131.32 L1002.59 128.06 L999.65 124.80 L996.68 121.54 L993.69 118.28 L990.66 115.02 L987.61 111.76 L984.54 108.50 L981.44 105.24 L978.31 101.98 L975.16 98.72 L971.99 95.46 L968.80 92.20 L965.58 88.94 L962.35 85.68 L959.10 82.42 L955.83 79.16 L952.55 75.90 L949.25 72.64 L945.93 69.38 L942.61 66.12 L939.26 62.86 L935.91 59.60 L932.55 56.34 L929.18 53.08 L925.80 49.82 L922.41 46.56 L919.02 43.30 L915.62 40.04 L912.22 36.78 L908.82 33.52 L905.41 30.26 L902.00 27.00" stroke="#6e6e6e" stroke-width="2.3" stroke-dasharray="2.3 3.2" fill="none"/>
<path d="M902.00 613.80 L904.56 610.54 L907.11 607.28 L909.67 604.02 L912.22 600.76 L914.77 597.50 L917.31 594.24 L919.85 590.98 L922.39 587.72 L924.91 584.46 L927.44 581.20 L929.95 577.94 L932.45 574.68 L934.95 571.42 L937.44 568.16 L939.91 564.90 L942.37 561.64 L944.83 558.38 L947.26 555.12 L949.69 551.86 L952.10 548.60 L954.49 545.34 L956.87 542.08 L959.23 538.82 L961.58 535.56 L963.90 532.30 L966.21 529.04 L968.50 525.78 L970.77 522.52 L973.01 519.26 L975.24 516.00 L977.44 512.74 L979.62 509.48 L981.78 506.22 L983.91 502.96 L986.01 499.70 L988.10 496.44 L990.15 493.18 L992.18 489.92 L994.18 486.66 L996.15 483.40 L998.10 480.14 L1000.01 476.88 L1001.90 473.62 L1003.75 470.36 L1005.57 467.10 L1007.37 463.84 L1009.13 460.58 L1010.85 457.32 L1012.55 454.06 L1014.21 450.80 L1015.83 447.54 L1017.42 444.28 L1018.98 441.02 L1020.50 437.76 L1021.99 434.50 L1023.43 431.24 L1024.84 427.98 L1026.22 424.72 L1027.55 421.46 L1028.85 418.20 L1030.11 414.94 L1031.33 411.68 L1032.51 408.42 L1033.65 405.16 L1034.75 401.90 L1035.81 398.64 L1036.83 395.38 L1037.81 392.12 L1038.75 388.86 L1039.64 385.60 L1040.49 382.34 L1041.31 379.08 L1042.07 375.82 L1042.80 372.56 L1043.48 369.30 L1044.12 366.04 L1044.72 362.78 L1045.27 359.52 L1045.78 356.26 L1046.25 353.00 L1046.67 349.74 L1047.05 346.48 L1047.38 343.22 L1047.67 339.96 L1047.92 336.70 L1048.12 333.44 L1048.27 330.18 L1048.39 326.92 L1048.45 323.66 L1048.47 320.40 L1048.45 317.14 L1048.39 313.88 L1048.27 310.62 L1048.12 307.36 L1047.92 304.10 L1047.67 300.84 L1047.38 297.58 L1047.05 294.32 L1046.67 291.06 L1046.25 287.80 L1045.78 284.54 L1045.27 281.28 L1044.72 278.02 L1044.12 274.76 L1043.48 271.50 L1042.80 268.24 L1042.07 264.98 L1041.31 261.72 L1040.49 258.46 L1039.64 255.20 L1038.75 251.94 L1037.81 248.68 L1036.83 245.42 L1035.81 242.16 L1034.75 238.90 L1033.65 235.64 L1032.51 232.38 L1031.33 229.12 L1030.11 225.86 L1028.85 222.60 L1027.55 219.34 L1026.22 216.08 L1024.84 212.82 L1023.43 209.56 L1021.99 206.30 L1020.50 203.04 L1018.98 199.78 L1017.42 196.52 L1015.83 193.26 L1014.21 190.00 L1012.55 186.74 L1010.85 183.48 L1009.13 180.22 L1007.37 176.96 L1005.57 173.70 L1003.75 170.44 L1001.90 167.18 L1000.01 163.92 L998.10 160.66 L996.15 157.40 L994.18 154.14 L992.18 150.88 L990.15 147.62 L988.10 144.36 L986.01 141.10 L983.91 137.84 L981.78 134.58 L979.62 131.32 L977.44 128.06 L975.24 124.80 L973.01 121.54 L970.77 118.28 L968.50 115.02 L966.21 111.76 L963.90 108.50 L961.58 105.24 L959.23 101.98 L956.87 98.72 L954.49 95.46 L952.10 92.20 L949.69 88.94 L947.26 85.68 L944.83 82.42 L942.37 79.16 L939.91 75.90 L937.44 72.64 L934.95 69.38 L932.45 66.12 L929.95 62.86 L927.44 59.60 L924.91 56.34 L922.39 53.08 L919.85 49.82 L917.31 46.56 L914.77 43.30 L912.22 40.04 L909.67 36.78 L907.11 33.52 L904.56 30.26 L902.00 27.00" stroke="#6e6e6e" stroke-width="2.3" stroke-dasharray="2.3 3.2" fill="none"/>
<path d="M902.00 613.80 L903.70 610.54 L905.41 607.28 L907.11 604.02 L908.81 600.76 L910.51 597.50 L912.21 594.24 L913.90 590.98 L915.59 587.72 L917.28 584.46 L918.96 581.20 L920.63 577.94 L922.30 574.68 L923.97 571.42 L925.62 568.16 L927.27 564.90 L928.92 561.64 L930.55 558.38 L932.18 555.12 L933.79 551.86 L935.40 548.60 L936.99 545.34 L938.58 542.08 L940.15 538.82 L941.72 535.56 L943.27 532.30 L944.81 529.04 L946.33 525.78 L947.84 522.52 L949.34 519.26 L950.83 516.00 L952.29 512.74 L953.75 509.48 L955.18 506.22 L956.61 502.96 L958.01 499.70 L959.40 496.44 L960.77 493.18 L962.12 489.92 L963.45 486.66 L964.77 483.40 L966.06 480.14 L967.34 476.88 L968.60 473.62 L969.83 470.36 L971.05 467.10 L972.24 463.84 L973.42 460.58 L974.57 457.32 L975.70 454.06 L976.80 450.80 L977.89 447.54 L978.95 444.28 L979.99 441.02 L981.00 437.76 L981.99 434.50 L982.96 431.24 L983.90 427.98 L984.81 424.72 L985.70 421.46 L986.57 418.20 L987.41 414.94 L988.22 411.68 L989.01 408.42 L989.77 405.16 L990.50 401.90 L991.21 398.64 L991.89 395.38 L992.54 392.12 L993.16 388.86 L993.76 385.60 L994.33 382.34 L994.87 379.08 L995.38 375.82 L995.87 372.56 L996.32 369.30 L996.75 366.04 L997.15 362.78 L997.52 359.52 L997.86 356.26 L998.17 353.00 L998.45 349.74 L998.70 346.48 L998.92 343.22 L999.12 339.96 L999.28 336.70 L999.41 333.44 L999.52 330.18 L999.59 326.92 L999.64 323.66 L999.65 320.40 L999.64 317.14 L999.59 313.88 L999.52 310.62 L999.41 307.36 L999.28 304.10 L999.12 300.84 L998.92 297.58 L998.70 294.32 L998.45 291.06 L998.17 287.80 L997.86 284.54 L997.52 281.28 L997.15 278.02 L996.75 274.76 L996.32 271.50 L995.87 268.24 L995.38 264.98 L994.87 261.72 L994.33 258.46 L993.76 255.20 L993.16 251.94 L992.54 248.68 L991.89 245.42 L991.21 242.16 L990.50 238.90 L989.77 235.64 L989.01 232.38 L988.22 229.12 L987.41 225.86 L986.57 222.60 L985.70 219.34 L984.81 216.08 L983.90 212.82 L982.96 209.56 L981.99 206.30 L981.00 203.04 L979.99 199.78 L978.95 196.52 L977.89 193.26 L976.80 190.00 L975.70 186.74 L974.57 183.48 L973.42 180.22 L972.24 176.96 L971.05 173.70 L969.83 170.44 L968.60 167.18 L967.34 163.92 L966.06 160.66 L964.77 157.40 L963.45 154.14 L962.12 150.88 L960.77 147.62 L959.40 144.36 L958.01 141.10 L956.61 137.84 L955.18 134.58 L953.75 131.32 L952.29 128.06 L950.83 124.80 L949.34 121.54 L947.84 118.28 L946.33 115.02 L944.81 111.76 L943.27 108.50 L941.72 105.24 L940.15 101.98 L938.58 98.72 L936.99 95.46 L935.40 92.20 L933.79 88.94 L932.18 85.68 L930.55 82.42 L928.92 79.16 L927.27 75.90 L925.62 72.64 L923.97 69.38 L922.30 66.12 L920.63 62.86 L918.96 59.60 L917.28 56.34 L915.59 53.08 L913.90 49.82 L912.21 46.56 L910.51 43.30 L908.81 40.04 L907.11 36.78 L905.41 33.52 L903.70 30.26 L902.00 27.00" stroke="#6e6e6e" stroke-width="2.3" stroke-dasharray="2.3 3.2" fill="none"/>
<path d="M902.00 613.80 L902.85 610.54 L903.70 607.28 L904.56 604.02 L905.41 600.76 L906.26 597.50 L907.10 594.24 L907.95 590.98 L908.80 587.72 L909.64 584.46 L910.48 581.20 L911.32 577.94 L912.15 574.68 L912.98 571.42 L913.81 568.16 L914.64 564.90 L915.46 561.64 L916.28 558.38 L917.09 555.12 L917.90 551.86 L918.70 548.60 L919.50 545.34 L920.29 542.08 L921.08 538.82 L921.86 535.56 L922.63 532.30 L923.40 529.04 L924.17 525.78 L924.92 522.52 L925.67 519.26 L926.41 516.00 L927.15 512.74 L927.87 509.48 L928.59 506.22 L929.30 502.96 L930.00 499.70 L930.70 496.44 L931.38 493.18 L932.06 489.92 L932.73 486.66 L933.38 483.40 L934.03 480.14 L934.67 476.88 L935.30 473.62 L935.92 470.36 L936.52 467.10 L937.12 463.84 L937.71 460.58 L938.28 457.32 L938.85 454.06 L939.40 450.80 L939.94 447.54 L940.47 444.28 L940.99 441.02 L941.50 437.76 L942.00 434.50 L942.48 431.24 L942.95 427.98 L943.41 424.72 L943.85 421.46 L944.28 418.20 L944.70 414.94 L945.11 411.68 L945.50 408.42 L945.88 405.16 L946.25 401.90 L946.60 398.64 L946.94 395.38 L947.27 392.12 L947.58 388.86 L947.88 385.60 L948.16 382.34 L948.44 379.08 L948.69 375.82 L948.93 372.56 L949.16 369.30 L949.37 366.04 L949.57 362.78 L949.76 359.52 L949.93 356.26 L950.08 353.00 L950.22 349.74 L950.35 346.48 L950.46 343.22 L950.56 339.96 L950.64 336.70 L950.71 333.44 L950.76 330.18 L950.80 326.92 L950.82 323.66 L950.83 320.40 L950.82 317.14 L950.80 313.88 L950.76 310.62 L950.71 307.36 L950.64 304.10 L950.56 300.84 L950.46 297.58 L950.35 294.32 L950.22 291.06 L950.08 287.80 L949.93 284.54 L949.76 281.28 L949.57 278.02 L949.37 274.76 L949.16 271.50 L948.93 268.24 L948.69 264.98 L948.44 261.72 L948.16 258.46 L947.88 255.20 L947.58 251.94 L947.27 248.68 L946.94 245.42 L946.60 242.16 L946.25 238.90 L945.88 235.64 L945.50 232.38 L945.11 229.12 L944.70 225.86 L944.28 222.60 L943.85 219.34 L943.41 216.08 L942.95 212.82 L942.48 209.56 L942.00 206.30 L941.50 203.04 L940.99 199.78 L940.47 196.52 L939.94 193.26 L939.40 190.00 L938.85 186.74 L938.28 183.48 L937.71 180.22 L937.12 176.96 L936.52 173.70 L935.92 170.44 L935.30 167.18 L934.67 163.92 L934.03 160.66 L933.38 157.40 L932.73 154.14 L932.06 150.88 L931.38 147.62 L930.70 144.36 L930.00 141.10 L929.30 137.84 L928.59 134.58 L927.87 131.32 L927.15 128.06 L926.41 124.80 L925.67 121.54 L924.92 118.28 L924.17 115.02 L923.40 111.76 L922.63 108.50 L921.86 105.24 L921.08 101.98 L920.29 98.72 L919.50 95.46 L918.70 92.20 L917.90 88.94 L917.09 85.68 L916.28 82.42 L915.46 79.16 L914.64 75.90 L913.81 72.64 L912.98 69.38 L912.15 66.12 L911.32 62.86 L910.48 59.60 L909.64 56.34 L908.80 53.08 L907.95 49.82 L907.10 46.56 L906.26 43.30 L905.41 40.04 L904.56 36.78 L903.70 33.52 L902.85 30.26 L902.00 27.00" stroke="#6e6e6e" stroke-width="2.3" stroke-dasharray="2.3 3.2" fill="none"/>
<path d="M902.00 613.80 L902.00 610.54 L902.00 607.28 L902.00 604.02 L902.00 600.76 L902.00 597.50 L902.00 594.24 L902.00 590.98 L902.00 587.72 L902.00 584.46 L902.00 581.20 L902.00 577.94 L902.00 574.68 L902.00 571.42 L902.00 568.16 L902.00 564.90 L902.00 561.64 L902.00 558.38 L902.00 555.12 L902.00 551.86 L902.00 548.60 L902.00 545.34 L902.00 542.08 L902.00 538.82 L902.00 535.56 L902.00 532.30 L902.00 529.04 L902.00 525.78 L902.00 522.52 L902.00 519.26 L902.00 516.00 L902.00 512.74 L902.00 509.48 L902.00 506.22 L902.00 502.96 L902.00 499.70 L902.00 496.44 L902.00 493.18 L902.00 489.92 L902.00 486.66 L902.00 483.40 L902.00 480.14 L902.00 476.88 L902.00 473.62 L902.00 470.36 L902.00 467.10 L902.00 463.84 L902.00 460.58 L902.00 457.32 L902.00 454.06 L902.00 450.80 L902.00 447.54 L902.00 444.28 L902.00 441.02 L902.00 437.76 L902.00 434.50 L902.00 431.24 L902.00 427.98 L902.00 424.72 L902.00 421.46 L902.00 418.20 L902.00 414.94 L902.00 411.68 L902.00 408.42 L902.00 405.16 L902.00 401.90 L902.00 398.64 L902.00 395.38 L902.00 392.12 L902.00 388.86 L902.00 385.60 L902.00 382.34 L902.00 379.08 L902.00 375.82 L902.00 372.56 L902.00 369.30 L902.00 366.04 L902.00 362.78 L902.00 359.52 L902.00 356.26 L902.00 353.00 L902.00 349.74 L902.00 346.48 L902.00 343.22 L902.00 339.96 L902.00 336.70 L902.00 333.44 L902.00 330.18 L902.00 326.92 L902.00 323.66 L902.00 320.40 L902.00 317.14 L902.00 313.88 L902.00 310.62 L902.00 307.36 L902.00 304.10 L902.00 300.84 L902.00 297.58 L902.00 294.32 L902.00 291.06 L902.00 287.80 L902.00 284.54 L902.00 281.28 L902.00 278.02 L902.00 274.76 L902.00 271.50 L902.00 268.24 L902.00 264.98 L902.00 261.72 L902.00 258.46 L902.00 255.20 L902.00 251.94 L902.00 248.68 L902.00 245.42 L902.00 242.16 L902.00 238.90 L902.00 235.64 L902.00 232.38 L902.00 229.12 L902.00 225.86 L902.00 222.60 L902.00 219.34 L902.00 216.08 L902.00 212.82 L902.00 209.56 L902.00 206.30 L902.00 203.04 L902.00 199.78 L902.00 196.52 L902.00 193.26 L902.00 190.00 L902.00 186.74 L902.00 183.48 L902.00 180.22 L902.00 176.96 L902.00 173.70 L902.00 170.44 L902.00 167.18 L902.00 163.92 L902.00 160.66 L902.00 157.40 L902.00 154.14 L902.00 150.88 L902.00 147.62 L902.00 144.36 L902.00 141.10 L902.00 137.84 L902.00 134.58 L902.00 131.32 L902.00 128.06 L902.00 124.80 L902.00 121.54 L902.00 118.28 L902.00 115.02 L902.00 111.76 L902.00 108.50 L902.00 105.24 L902.00 101.98 L902.00 98.72 L902.00 95.46 L902.00 92.20 L902.00 88.94 L902.00 85.68 L902.00 82.42 L902.00 79.16 L902.00 75.90 L902.00 72.64 L902.00 69.38 L902.00 66.12 L902.00 62.86 L902.00 59.60 L902.00 56.34 L902.00 53.08 L902.00 49.82 L902.00 46.56 L902.00 43.30 L902.00 40.04 L902.00 36.78 L902.00 33.52 L902.00 30.26 L902.00 27.00" stroke="#6e6e6e" stroke-width="2.3" stroke-dasharray="2.3 3.2" fill="none"/>
<path d="M902.00 613.80 L901.15 610.54 L900.30 607.28 L899.44 604.02 L898.59 600.76 L897.74 597.50 L896.90 594.24 L896.05 590.98 L895.20 587.72 L894.36 584.46 L893.52 581.20 L892.68 577.94 L891.85 574.68 L891.02 571.42 L890.19 568.16 L889.36 564.90 L888.54 561.64 L887.72 558.38 L886.91 555.12 L886.10 551.86 L885.30 548.60 L884.50 545.34 L883.71 542.08 L882.92 538.82 L882.14 535.56 L881.37 532.30 L880.60 529.04 L879.83 525.78 L879.08 522.52 L878.33 519.26 L877.59 516.00 L876.85 512.74 L876.13 509.48 L875.41 506.22 L874.70 502.96 L874.00 499.70 L873.30 496.44 L872.62 493.18 L871.94 489.92 L871.27 486.66 L870.62 483.40 L869.97 480.14 L869.33 476.88 L868.70 473.62 L868.08 470.36 L867.48 467.10 L866.88 463.84 L866.29 460.58 L865.72 457.32 L865.15 454.06 L864.60 450.80 L864.06 447.54 L863.53 444.28 L863.01 441.02 L862.50 437.76 L862.00 434.50 L861.52 431.24 L861.05 427.98 L860.59 424.72 L860.15 421.46 L859.72 418.20 L859.30 414.94 L858.89 411.68 L858.50 408.42 L858.12 405.16 L857.75 401.90 L857.40 398.64 L857.06 395.38 L856.73 392.12 L856.42 388.86 L856.12 385.60 L855.84 382.34 L855.56 379.08 L855.31 375.82 L855.07 372.56 L854.84 369.30 L854.63 366.04 L854.43 362.78 L854.24 359.52 L854.07 356.26 L853.92 353.00 L853.78 349.74 L853.65 346.48 L853.54 343.22 L853.44 339.96 L853.36 336.70 L853.29 333.44 L853.24 330.18 L853.20 326.92 L853.18 323.66 L853.17 320.40 L853.18 317.14 L853.20 313.88 L853.24 310.62 L853.29 307.36 L853.36 304.10 L853.44 300.84 L853.54 297.58 L853.65 294.32 L853.78 291.06 L853.92 287.80 L854.07 284.54 L854.24 281.28 L854.43 278.02 L854.63 274.76 L854.84 271.50 L855.07 268.24 L855.31 264.98 L855.56 261.72 L855.84 258.46 L856.12 255.20 L856.42 251.94 L856.73 248.68 L857.06 245.42 L857.40 242.16 L857.75 238.90 L858.12 235.64 L858.50 232.38 L858.89 229.12 L859.30 225.86 L859.72 222.60 L860.15 219.34 L860.59 216.08 L861.05 212.82 L861.52 209.56 L862.00 206.30 L862.50 203.04 L863.01 199.78 L863.53 196.52 L864.06 193.26 L864.60 190.00 L865.15 186.74 L865.72 183.48 L866.29 180.22 L866.88 176.96 L867.48 173.70 L868.08 170.44 L868.70 167.18 L869.33 163.92 L869.97 160.66 L870.62 157.40 L871.27 154.14 L871.94 150.88 L872.62 147.62 L873.30 144.36 L874.00 141.10 L874.70 137.84 L875.41 134.58 L876.13 131.32 L876.85 128.06 L877.59 124.80 L878.33 121.54 L879.08 118.28 L879.83 115.02 L880.60 111.76 L881.37 108.50 L882.14 105.24 L882.92 101.98 L883.71 98.72 L884.50 95.46 L885.30 92.20 L886.10 88.94 L886.91 85.68 L887.72 82.42 L888.54 79.16 L889.36 75.90 L890.19 72.64 L891.02 69.38 L891.85 66.12 L892.68 62.86 L893.52 59.60 L894.36 56.34 L895.20 53.08 L896.05 49.82 L896.90 46.56 L897.74 43.30 L898.59 40.04 L899.44 36.78 L900.30 33.52 L901.15 30.26 L902.00 27.00" stroke="#6e6e6e" stroke-width="2.3" stroke-dasharray="2.3 3.2" fill="none"/>
<path d="M902.00 613.80 L900.30 610.54 L898.59 607.28 L896.89 604.02 L895.19 600.76 L893.49 597.50 L891.79 594.24 L890.10 590.98 L888.41 587.72 L886.72 584.46 L885.04 581.20 L883.37 577.94 L881.70 574.68 L880.03 571.42 L878.38 568.16 L876.73 564.90 L875.08 561.64 L873.45 558.38 L871.82 555.12 L870.21 551.86 L868.60 548.60 L867.01 545.34 L865.42 542.08 L863.85 538.82 L862.28 535.56 L860.73 532.30 L859.19 529.04 L857.67 525.78 L856.16 522.52 L854.66 519.26 L853.17 516.00 L851.71 512.74 L850.25 509.48 L848.82 506.22 L847.39 502.96 L845.99 499.70 L844.60 496.44 L843.23 493.18 L841.88 489.92 L840.55 486.66 L839.23 483.40 L837.94 480.14 L836.66 476.88 L835.40 473.62 L834.17 470.36 L832.95 467.10 L831.76 463.84 L830.58 460.58 L829.43 457.32 L828.30 454.06 L827.20 450.80 L826.11 447.54 L825.05 444.28 L824.01 441.02 L823.00 437.76 L822.01 434.50 L821.04 431.24 L820.10 427.98 L819.19 424.72 L818.30 421.46 L817.43 418.20 L816.59 414.94 L815.78 411.68 L814.99 408.42 L814.23 405.16 L813.50 401.90 L812.79 398.64 L812.11 395.38 L811.46 392.12 L810.84 388.86 L810.24 385.60 L809.67 382.34 L809.13 379.08 L808.62 375.82 L808.13 372.56 L807.68 369.30 L807.25 366.04 L806.85 362.78 L806.48 359.52 L806.14 356.26 L805.83 353.00 L805.55 349.74 L805.30 346.48 L805.08 343.22 L804.88 339.96 L804.72 336.70 L804.59 333.44 L804.48 330.18 L804.41 326.92 L804.36 323.66 L804.35 320.40 L804.36 317.14 L804.41 313.88 L804.48 310.62 L804.59 307.36 L804.72 304.10 L804.88 300.84 L805.08 297.58 L805.30 294.32 L805.55 291.06 L805.83 287.80 L806.14 284.54 L806.48 281.28 L806.85 278.02 L807.25 274.76 L807.68 271.50 L808.13 268.24 L808.62 264.98 L809.13 261.72 L809.67 258.46 L810.24 255.20 L810.84 251.94 L811.46 248.68 L812.11 245.42 L812.79 242.16 L813.50 238.90 L814.23 235.64 L814.99 232.38 L815.78 229.12 L816.59 225.86 L817.43 222.60 L818.30 219.34 L819.19 216.08 L820.10 212.82 L821.04 209.56 L822.01 206.30 L823.00 203.04 L824.01 199.78 L825.05 196.52 L826.11 193.26 L827.20 190.00 L828.30 186.74 L829.43 183.48 L830.58 180.22 L831.76 176.96 L832.95 173.70 L834.17 170.44 L835.40 167.18 L836.66 163.92 L837.94 160.66 L839.23 157.40 L840.55 154.14 L841.88 150.88 L843.23 147.62 L844.60 144.36 L845.99 141.10 L847.39 137.84 L848.82 134.58 L850.25 131.32 L851.71 128.06 L853.17 124.80 L854.66 121.54 L856.16 118.28 L857.67 115.02 L859.19 111.76 L860.73 108.50 L862.28 105.24 L863.85 101.98 L865.42 98.72 L867.01 95.46 L868.60 92.20 L870.21 88.94 L871.82 85.68 L873.45 82.42 L875.08 79.16 L876.73 75.90 L878.38 72.64 L880.03 69.38 L881.70 66.12 L883.37 62.86 L885.04 59.60 L886.72 56.34 L888.41 53.08 L890.10 49.82 L891.79 46.56 L893.49 43.30 L895.19 40.04 L896.89 36.78 L898.59 33.52 L900.30 30.26 L902.00 27.00" stroke="#6e6e6e" stroke-width="2.3" stroke-dasharray="2.3 3.2" fill="none"/>
<path d="M902.00 613.80 L899.44 610.54 L896.89 607.28 L894.33 604.02 L891.78 600.76 L889.23 597.50 L886.69 594.24 L884.15 590.98 L881.61 587.72 L879.09 584.46 L876.56 581.20 L874.05 577.94 L871.55 574.68 L869.05 571.42 L866.56 568.16 L864.09 564.90 L861.63 561.64 L859.17 558.38 L856.74 555.12 L854.31 551.86 L851.90 548.60 L849.51 545.34 L847.13 542.08 L844.77 538.82 L842.42 535.56 L840.10 532.30 L837.79 529.04 L835.50 525.78 L833.23 522.52 L830.99 519.26 L828.76 516.00 L826.56 512.74 L824.38 509.48 L822.22 506.22 L820.09 502.96 L817.99 499.70 L815.90 496.44 L813.85 493.18 L811.82 489.92 L809.82 486.66 L807.85 483.40 L805.90 480.14 L803.99 476.88 L802.10 473.62 L800.25 470.36 L798.43 467.10 L796.63 463.84 L794.87 460.58 L793.15 457.32 L791.45 454.06 L789.79 450.80 L788.17 447.54 L786.58 444.28 L785.02 441.02 L783.50 437.76 L782.01 434.50 L780.57 431.24 L779.16 427.98 L777.78 424.72 L776.45 421.46 L775.15 418.20 L773.89 414.94 L772.67 411.68 L771.49 408.42 L770.35 405.16 L769.25 401.90 L768.19 398.64 L767.17 395.38 L766.19 392.12 L765.25 388.86 L764.36 385.60 L763.51 382.34 L762.69 379.08 L761.93 375.82 L761.20 372.56 L760.52 369.30 L759.88 366.04 L759.28 362.78 L758.73 359.52 L758.22 356.26 L757.75 353.00 L757.33 349.74 L756.95 346.48 L756.62 343.22 L756.33 339.96 L756.08 336.70 L755.88 333.44 L755.73 330.18 L755.61 326.92 L755.55 323.66 L755.52 320.40 L755.55 317.14 L755.61 313.88 L755.73 310.62 L755.88 307.36 L756.08 304.10 L756.33 300.84 L756.62 297.58 L756.95 294.32 L757.33 291.06 L757.75 287.80 L758.22 284.54 L758.73 281.28 L759.28 278.02 L759.88 274.76 L760.52 271.50 L761.20 268.24 L761.93 264.98 L762.69 261.72 L763.51 258.46 L764.36 255.20 L765.25 251.94 L766.19 248.68 L767.17 245.42 L768.19 242.16 L769.25 238.90 L770.35 235.64 L771.49 232.38 L772.67 229.12 L773.89 225.86 L775.15 222.60 L776.45 219.34 L777.78 216.08 L779.16 212.82 L780.57 209.56 L782.01 206.30 L783.50 203.04 L785.02 199.78 L786.58 196.52 L788.17 193.26 L789.79 190.00 L791.45 186.74 L793.15 183.48 L794.87 180.22 L796.63 176.96 L798.43 173.70 L800.25 170.44 L802.10 167.18 L803.99 163.92 L805.90 160.66 L807.85 157.40 L809.82 154.14 L811.82 150.88 L813.85 147.62 L815.90 144.36 L817.99 141.10 L820.09 137.84 L822.22 134.58 L824.38 131.32 L826.56 128.06 L828.76 124.80 L830.99 121.54 L833.23 118.28 L835.50 115.02 L837.79 111.76 L840.10 108.50 L842.42 105.24 L844.77 101.98 L847.13 98.72 L849.51 95.46 L851.90 92.20 L854.31 88.94 L856.74 85.68 L859.17 82.42 L861.63 79.16 L864.09 75.90 L866.56 72.64 L869.05 69.38 L871.55 66.12 L874.05 62.86 L876.56 59.60 L879.09 56.34 L881.61 53.08 L884.15 49.82 L886.69 46.56 L889.23 43.30 L891.78 40.04 L894.33 36.78 L896.89 33.52 L899.44 30.26 L902.00 27.00" stroke="#6e6e6e" stroke-width="2.3" stroke-dasharray="2.3 3.2" fill="none"/>
<path d="M902.00 613.80 L898.59 610.54 L895.18 607.28 L891.78 604.02 L888.38 600.76 L884.98 597.50 L881.59 594.24 L878.20 590.98 L874.82 587.72 L871.45 584.46 L868.09 581.20 L864.74 577.94 L861.39 574.68 L858.07 571.42 L854.75 568.16 L851.45 564.90 L848.17 561.64 L844.90 558.38 L841.65 555.12 L838.42 551.86 L835.20 548.60 L832.01 545.34 L828.84 542.08 L825.69 538.82 L822.56 535.56 L819.46 532.30 L816.39 529.04 L813.34 525.78 L810.31 522.52 L807.32 519.26 L804.35 516.00 L801.41 512.74 L798.51 509.48 L795.63 506.22 L792.79 502.96 L789.98 499.70 L787.21 496.44 L784.47 493.18 L781.76 489.92 L779.09 486.66 L776.46 483.40 L773.87 480.14 L771.32 476.88 L768.81 473.62 L766.33 470.36 L763.90 467.10 L761.51 463.84 L759.17 460.58 L756.86 457.32 L754.61 454.06 L752.39 450.80 L750.22 447.54 L748.10 444.28 L746.03 441.02 L744.00 437.76 L742.02 434.50 L740.09 431.24 L738.21 427.98 L736.38 424.72 L734.60 421.46 L732.87 418.20 L731.19 414.94 L729.56 411.68 L727.99 408.42 L726.47 405.16 L725.00 401.90 L723.58 398.64 L722.23 395.38 L720.92 392.12 L719.67 388.86 L718.48 385.60 L717.34 382.34 L716.26 379.08 L715.23 375.82 L714.27 372.56 L713.35 369.30 L712.50 366.04 L711.71 362.78 L710.97 359.52 L710.29 356.26 L709.67 353.00 L709.10 349.74 L708.60 346.48 L708.16 343.22 L707.77 339.96 L707.44 336.70 L707.18 333.44 L706.97 330.18 L706.82 326.92 L706.73 323.66 L706.70 320.40 L706.73 317.14 L706.82 313.88 L706.97 310.62 L707.18 307.36 L707.44 304.10 L707.77 300.84 L708.16 297.58 L708.60 294.32 L709.10 291.06 L709.67 287.80 L710.29 284.54 L710.97 281.28 L711.71 278.02 L712.50 274.76 L713.35 271.50 L714.27 268.24 L715.23 264.98 L716.26 261.72 L717.34 258.46 L718.48 255.20 L719.67 251.94 L720.92 248.68 L722.23 245.42 L723.58 242.16 L725.00 238.90 L726.47 235.64 L727.99 232.38 L729.56 229.12 L731.19 225.86 L732.87 222.60 L734.60 219.34 L736.38 216.08 L738.21 212.82 L740.09 209.56 L742.02 206.30 L744.00 203.04 L746.03 199.78 L748.10 196.52 L750.22 193.26 L752.39 190.00 L754.61 186.74 L756.86 183.48 L759.17 180.22 L761.51 176.96 L763.90 173.70 L766.33 170.44 L768.81 167.18 L771.32 163.92 L773.87 160.66 L776.46 157.40 L779.09 154.14 L781.76 150.88 L784.47 147.62 L787.21 144.36 L789.98 141.10 L792.79 137.84 L795.63 134.58 L798.51 131.32 L801.41 128.06 L804.35 124.80 L807.32 121.54 L810.31 118.28 L813.34 115.02 L816.39 111.76 L819.46 108.50 L822.56 105.24 L825.69 101.98 L828.84 98.72 L832.01 95.46 L835.20 92.20 L838.42 88.94 L841.65 85.68 L844.90 82.42 L848.17 79.16 L851.45 75.90 L854.75 72.64 L858.07 69.38 L861.39 66.12 L864.74 62.86 L868.09 59.60 L871.45 56.34 L874.82 53.08 L878.20 49.82 L881.59 46.56 L884.98 43.30 L888.38 40.04 L891.78 36.78 L895.18 33.52 L898.59 30.26 L902.00 27.00" stroke="#6e6e6e" stroke-width="2.3" stroke-dasharray="2.3 3.2" fill="none"/>
<path d="M902.00 613.80 L897.74 610.54 L893.48 607.28 L889.22 604.02 L884.97 600.76 L880.72 597.50 L876.48 594.24 L872.25 590.98 L868.02 587.72 L863.81 584.46 L859.61 581.20 L855.42 577.94 L851.24 574.68 L847.08 571.42 L842.94 568.16 L838.82 564.90 L834.71 561.64 L830.62 558.38 L826.56 555.12 L822.52 551.86 L818.50 548.60 L814.51 545.34 L810.55 542.08 L806.61 538.82 L802.71 535.56 L798.83 532.30 L794.98 529.04 L791.17 525.78 L787.39 522.52 L783.65 519.26 L779.94 516.00 L776.27 512.74 L772.63 509.48 L769.04 506.22 L765.49 502.96 L761.98 499.70 L758.51 496.44 L755.08 493.18 L751.70 489.92 L748.37 486.66 L745.08 483.40 L741.84 480.14 L738.65 476.88 L735.51 473.62 L732.42 470.36 L729.38 467.10 L726.39 463.84 L723.46 460.58 L720.58 457.32 L717.76 454.06 L714.99 450.80 L712.28 447.54 L709.63 444.28 L707.03 441.02 L704.50 437.76 L702.02 434.50 L699.61 431.24 L697.26 427.98 L694.97 424.72 L692.74 421.46 L690.58 418.20 L688.48 414.94 L686.45 411.68 L684.48 408.42 L682.58 405.16 L680.75 401.90 L678.98 398.64 L677.28 395.38 L675.65 392.12 L674.09 388.86 L672.60 385.60 L671.18 382.34 L669.82 379.08 L668.54 375.82 L667.33 372.56 L666.19 369.30 L665.13 366.04 L664.13 362.78 L663.21 359.52 L662.36 356.26 L661.58 353.00 L660.88 349.74 L660.25 346.48 L659.69 343.22 L659.21 339.96 L658.80 336.70 L658.47 333.44 L658.21 330.18 L658.02 326.92 L657.91 323.66 L657.88 320.40 L657.91 317.14 L658.02 313.88 L658.21 310.62 L658.47 307.36 L658.80 304.10 L659.21 300.84 L659.69 297.58 L660.25 294.32 L660.88 291.06 L661.58 287.80 L662.36 284.54 L663.21 281.28 L664.13 278.02 L665.13 274.76 L666.19 271.50 L667.33 268.24 L668.54 264.98 L669.82 261.72 L671.18 258.46 L672.60 255.20 L674.09 251.94 L675.65 248.68 L677.28 245.42 L678.98 242.16 L680.75 238.90 L682.58 235.64 L684.48 232.38 L686.45 229.12 L688.48 225.86 L690.58 222.60 L692.74 219.34 L694.97 216.08 L697.26 212.82 L699.61 209.56 L702.02 206.30 L704.50 203.04 L707.03 199.78 L709.63 196.52 L712.28 193.26 L714.99 190.00 L717.76 186.74 L720.58 183.48 L723.46 180.22 L726.39 176.96 L729.38 173.70 L732.42 170.44 L735.51 167.18 L738.65 163.92 L741.84 160.66 L745.08 157.40 L748.37 154.14 L751.70 150.88 L755.08 147.62 L758.51 144.36 L761.98 141.10 L765.49 137.84 L769.04 134.58 L772.63 131.32 L776.27 128.06 L779.94 124.80 L783.65 121.54 L787.39 118.28 L791.17 115.02 L794.98 111.76 L798.83 108.50 L802.71 105.24 L806.61 101.98 L810.55 98.72 L814.51 95.46 L818.50 92.20 L822.52 88.94 L826.56 85.68 L830.62 82.42 L834.71 79.16 L838.82 75.90 L842.94 72.64 L847.08 69.38 L851.24 66.12 L855.42 62.86 L859.61 59.60 L863.81 56.34 L868.02 53.08 L872.25 49.82 L876.48 46.56 L880.72 43.30 L884.97 40.04 L889.22 36.78 L893.48 33.52 L897.74 30.26 L902.00 27.00" stroke="#6e6e6e" stroke-width="2.3" stroke-dasharray="2.3 3.2" fill="none"/>
<path d="M902.00 613.80 L896.89 610.54 L891.78 607.28 L886.67 604.02 L881.56 600.76 L876.47 597.50 L871.38 594.24 L866.30 590.98 L861.23 587.72 L856.17 584.46 L851.13 581.20 L846.10 577.94 L841.09 574.68 L836.10 571.42 L831.13 568.16 L826.18 564.90 L821.25 561.64 L816.35 558.38 L811.47 555.12 L806.62 551.86 L801.81 548.60 L797.02 545.34 L792.26 542.08 L787.54 538.82 L782.85 535.56 L778.19 532.30 L773.58 529.04 L769.00 525.78 L764.47 522.52 L759.98 519.26 L755.52 516.00 L751.12 512.74 L746.76 509.48 L742.45 506.22 L738.18 502.96 L733.97 499.70 L729.81 496.44 L725.70 493.18 L721.64 489.92 L717.64 486.66 L713.70 483.40 L709.81 480.14 L705.98 476.88 L702.21 473.62 L698.50 470.36 L694.85 467.10 L691.27 463.84 L687.75 460.58 L684.30 457.32 L680.91 454.06 L677.59 450.80 L674.34 447.54 L671.15 444.28 L668.04 441.02 L665.00 437.76 L662.03 434.50 L659.13 431.24 L656.31 427.98 L653.56 424.72 L650.89 421.46 L648.30 418.20 L645.78 414.94 L643.34 411.68 L640.98 408.42 L638.70 405.16 L636.50 401.90 L634.38 398.64 L632.34 395.38 L630.38 392.12 L628.51 388.86 L626.72 385.60 L625.01 382.34 L623.39 379.08 L621.85 375.82 L620.40 372.56 L619.03 369.30 L617.75 366.04 L616.56 362.78 L615.45 359.52 L614.43 356.26 L613.50 353.00 L612.66 349.74 L611.90 346.48 L611.23 343.22 L610.65 339.96 L610.16 336.70 L609.76 333.44 L609.45 330.18 L609.23 326.92 L609.09 323.66 L609.05 320.40 L609.09 317.14 L609.23 313.88 L609.45 310.62 L609.76 307.36 L610.16 304.10 L610.65 300.84 L611.23 297.58 L611.90 294.32 L612.66 291.06 L613.50 287.80 L614.43 284.54 L615.45 281.28 L616.56 278.02 L617.75 274.76 L619.03 271.50 L620.40 268.24 L621.85 264.98 L623.39 261.72 L625.01 258.46 L626.72 255.20 L628.51 251.94 L630.38 248.68 L632.34 245.42 L634.38 242.16 L636.50 238.90 L638.70 235.64 L640.98 232.38 L643.34 229.12 L645.78 225.86 L648.30 222.60 L650.89 219.34 L653.56 216.08 L656.31 212.82 L659.13 209.56 L662.03 206.30 L665.00 203.04 L668.04 199.78 L671.15 196.52 L674.34 193.26 L677.59 190.00 L680.91 186.74 L684.30 183.48 L687.75 180.22 L691.27 176.96 L694.85 173.70 L698.50 170.44 L702.21 167.18 L705.98 163.92 L709.81 160.66 L713.70 157.40 L717.64 154.14 L721.64 150.88 L725.70 147.62 L729.81 144.36 L733.97 141.10 L738.18 137.84 L742.45 134.58 L746.76 131.32 L751.12 128.06 L755.52 124.80 L759.98 121.54 L764.47 118.28 L769.00 115.02 L773.58 111.76 L778.19 108.50 L782.85 105.24 L787.54 101.98 L792.26 98.72 L797.02 95.46 L801.81 92.20 L806.62 88.94 L811.47 85.68 L816.35 82.42 L821.25 79.16 L826.18 75.90 L831.13 72.64 L836.10 69.38 L841.09 66.12 L846.10 62.86 L851.13 59.60 L856.17 56.34 L861.23 53.08 L866.30 49.82 L871.38 46.56 L876.47 43.30 L881.56 40.04 L886.67 36.78 L891.78 33.52 L896.89 30.26 L902.00 27.00" stroke="#6e6e6e" stroke-width="2.3" stroke-dasharray="2.3 3.2" fill="none"/>
<path d="M902.00 613.80 L896.04 610.54 L890.07 607.28 L884.11 604.02 L878.16 600.76 L872.21 597.50 L866.27 594.24 L860.35 590.98 L854.43 587.72 L848.53 584.46 L842.65 581.20 L836.79 577.94 L830.94 574.68 L825.12 571.42 L819.32 568.16 L813.54 564.90 L807.79 561.64 L802.07 558.38 L796.39 555.12 L790.73 551.86 L785.11 548.60 L779.52 545.34 L773.97 542.08 L768.46 538.82 L762.99 535.56 L757.56 532.30 L752.18 529.04 L746.84 525.78 L741.55 522.52 L736.30 519.26 L731.11 516.00 L725.97 512.74 L720.89 509.48 L715.86 506.22 L710.88 502.96 L705.97 499.70 L701.11 496.44 L696.31 493.18 L691.58 489.92 L686.91 486.66 L682.31 483.40 L677.78 480.14 L673.31 476.88 L668.91 473.62 L664.58 470.36 L660.33 467.10 L656.15 463.84 L652.04 460.58 L648.01 457.32 L644.06 454.06 L640.19 450.80 L636.39 447.54 L632.68 444.28 L629.05 441.02 L625.50 437.76 L622.03 434.50 L618.66 431.24 L615.36 427.98 L612.16 424.72 L609.04 421.46 L606.01 418.20 L603.08 414.94 L600.23 411.68 L597.48 408.42 L594.81 405.16 L592.25 401.90 L589.77 398.64 L587.39 395.38 L585.11 392.12 L582.93 388.86 L580.84 385.60 L578.85 382.34 L576.95 379.08 L575.16 375.82 L573.46 372.56 L571.87 369.30 L570.38 366.04 L568.98 362.78 L567.69 359.52 L566.50 356.26 L565.42 353.00 L564.43 349.74 L563.55 346.48 L562.77 343.22 L562.10 339.96 L561.53 336.70 L561.06 333.44 L560.69 330.18 L560.43 326.92 L560.28 323.66 L560.23 320.40 L560.28 317.14 L560.43 313.88 L560.69 310.62 L561.06 307.36 L561.53 304.10 L562.10 300.84 L562.77 297.58 L563.55 294.32 L564.43 291.06 L565.42 287.80 L566.50 284.54 L567.69 281.28 L568.98 278.02 L570.38 274.76 L571.87 271.50 L573.46 268.24 L575.16 264.98 L576.95 261.72 L578.85 258.46 L580.84 255.20 L582.93 251.94 L585.11 248.68 L587.39 245.42 L589.77 242.16 L592.25 238.90 L594.81 235.64 L597.48 232.38 L600.23 229.12 L603.08 225.86 L606.01 222.60 L609.04 219.34 L612.16 216.08 L615.36 212.82 L618.66 209.56 L622.03 206.30 L625.50 203.04 L629.05 199.78 L632.68 196.52 L636.39 193.26 L640.19 190.00 L644.06 186.74 L648.01 183.48 L652.04 180.22 L656.15 176.96 L660.33 173.70 L664.58 170.44 L668.91 167.18 L673.31 163.92 L677.78 160.66 L682.31 157.40 L686.91 154.14 L691.58 150.88 L696.31 147.62 L701.11 144.36 L705.97 141.10 L710.88 137.84 L715.86 134.58 L720.89 131.32 L725.97 128.06 L731.11 124.80 L736.30 121.54 L741.55 118.28 L746.84 115.02 L752.18 111.76 L757.56 108.50 L762.99 105.24 L768.46 101.98 L773.97 98.72 L779.52 95.46 L785.11 92.20 L790.73 88.94 L796.39 85.68 L802.07 82.42 L807.79 79.16 L813.54 75.90 L819.32 72.64 L825.12 69.38 L830.94 66.12 L836.79 62.86 L842.65 59.60 L848.53 56.34 L854.43 53.08 L860.35 49.82 L866.27 46.56 L872.21 43.30 L878.16 40.04 L884.11 36.78 L890.07 33.52 L896.04 30.26 L902.00 27.00" stroke="#6e6e6e" stroke-width="2.3" stroke-dasharray="2.3 3.2" fill="none"/>
<path d="M902.00 613.80 L895.18 610.54 L888.37 607.28 L881.56 604.02 L874.75 600.76 L867.96 597.50 L861.17 594.24 L854.40 590.98 L847.64 587.72 L840.90 584.46 L834.17 581.20 L827.47 577.94 L820.79 574.68 L814.13 571.42 L807.51 568.16 L800.91 564.90 L794.34 561.64 L787.80 558.38 L781.30 555.12 L774.83 551.86 L768.41 548.60 L762.02 545.34 L755.68 542.08 L749.38 538.82 L743.13 535.56 L736.93 532.30 L730.77 529.04 L724.67 525.78 L718.62 522.52 L712.63 519.26 L706.70 516.00 L700.83 512.74 L695.01 509.48 L689.26 506.22 L683.58 502.96 L677.96 499.70 L672.41 496.44 L666.93 493.18 L661.52 489.92 L656.19 486.66 L650.93 483.40 L645.74 480.14 L640.64 476.88 L635.61 473.62 L630.67 470.36 L625.80 467.10 L621.03 463.84 L616.33 460.58 L611.73 457.32 L607.21 454.06 L602.78 450.80 L598.45 447.54 L594.20 444.28 L590.05 441.02 L586.00 437.76 L582.04 434.50 L578.18 431.24 L574.42 427.98 L570.75 424.72 L567.19 421.46 L563.73 418.20 L560.37 414.94 L557.12 411.68 L553.97 408.42 L550.93 405.16 L548.00 401.90 L545.17 398.64 L542.45 395.38 L539.84 392.12 L537.34 388.86 L534.96 385.60 L532.68 382.34 L530.52 379.08 L528.47 375.82 L526.53 372.56 L524.71 369.30 L523.00 366.04 L521.41 362.78 L519.94 359.52 L518.58 356.26 L517.33 353.00 L516.21 349.74 L515.20 346.48 L514.31 343.22 L513.54 339.96 L512.89 336.70 L512.35 333.44 L511.94 330.18 L511.64 326.92 L511.46 323.66 L511.40 320.40 L511.46 317.14 L511.64 313.88 L511.94 310.62 L512.35 307.36 L512.89 304.10 L513.54 300.84 L514.31 297.58 L515.20 294.32 L516.21 291.06 L517.33 287.80 L518.58 284.54 L519.94 281.28 L521.41 278.02 L523.00 274.76 L524.71 271.50 L526.53 268.24 L528.47 264.98 L530.52 261.72 L532.68 258.46 L534.96 255.20 L537.34 251.94 L539.84 248.68 L542.45 245.42 L545.17 242.16 L548.00 238.90 L550.93 235.64 L553.97 232.38 L557.12 229.12 L560.37 225.86 L563.73 222.60 L567.19 219.34 L570.75 216.08 L574.42 212.82 L578.18 209.56 L582.04 206.30 L586.00 203.04 L590.05 199.78 L594.20 196.52 L598.45 193.26 L602.78 190.00 L607.21 186.74 L611.73 183.48 L616.33 180.22 L621.03 176.96 L625.80 173.70 L630.67 170.44 L635.61 167.18 L640.64 163.92 L645.74 160.66 L650.93 157.40 L656.19 154.14 L661.52 150.88 L666.93 147.62 L672.41 144.36 L677.96 141.10 L683.58 137.84 L689.26 134.58 L695.01 131.32 L700.83 128.06 L706.70 124.80 L712.63 121.54 L718.62 118.28 L724.67 115.02 L730.77 111.76 L736.93 108.50 L743.13 105.24 L749.38 101.98 L755.68 98.72 L762.02 95.46 L768.41 92.20 L774.83 88.94 L781.30 85.68 L787.80 82.42 L794.34 79.16 L800.91 75.90 L807.51 72.64 L814.13 69.38 L820.79 66.12 L827.47 62.86 L834.17 59.60 L840.90 56.34 L847.64 53.08 L854.40 49.82 L861.17 46.56 L867.96 43.30 L874.75 40.04 L881.56 36.78 L888.37 33.52 L895.18 30.26 L902.00 27.00" stroke="#6e6e6e" stroke-width="2.3" stroke-dasharray="2.3 3.2" fill="none"/>
<path d="M902.00 613.80 L894.33 610.54 L886.66 607.28 L879.00 604.02 L871.35 600.76 L863.70 597.50 L856.07 594.24 L848.45 590.98 L840.84 587.72 L833.26 584.46 L825.69 581.20 L818.15 577.94 L810.64 574.68 L803.15 571.42 L795.69 568.16 L788.27 564.90 L780.88 561.64 L773.52 558.38 L766.21 555.12 L758.94 551.86 L751.71 548.60 L744.52 545.34 L737.39 542.08 L730.30 538.82 L723.27 535.56 L716.29 532.30 L709.37 529.04 L702.51 525.78 L695.70 522.52 L688.96 519.26 L682.29 516.00 L675.68 512.74 L669.14 509.48 L662.67 506.22 L656.28 502.96 L649.96 499.70 L643.71 496.44 L637.55 493.18 L631.46 489.92 L625.46 486.66 L619.54 483.40 L613.71 480.14 L607.97 476.88 L602.31 473.62 L596.75 470.36 L591.28 467.10 L585.90 463.84 L580.62 460.58 L575.44 457.32 L570.36 454.06 L565.38 450.80 L560.50 447.54 L555.73 444.28 L551.06 441.02 L546.50 437.76 L542.04 434.50 L537.70 431.24 L533.47 427.98 L529.35 424.72 L525.34 421.46 L521.45 418.20 L517.67 414.94 L514.01 411.68 L510.47 408.42 L507.05 405.16 L503.75 401.90 L500.57 398.64 L497.51 395.38 L494.57 392.12 L491.76 388.86 L489.08 385.60 L486.52 382.34 L484.08 379.08 L481.78 375.82 L479.60 372.56 L477.55 369.30 L475.63 366.04 L473.84 362.78 L472.18 359.52 L470.65 356.26 L469.25 353.00 L467.99 349.74 L466.85 346.48 L465.85 343.22 L464.98 339.96 L464.25 336.70 L463.65 333.44 L463.18 330.18 L462.84 326.92 L462.64 323.66 L462.57 320.40 L462.64 317.14 L462.84 313.88 L463.18 310.62 L463.65 307.36 L464.25 304.10 L464.98 300.84 L465.85 297.58 L466.85 294.32 L467.99 291.06 L469.25 287.80 L470.65 284.54 L472.18 281.28 L473.84 278.02 L475.63 274.76 L477.55 271.50 L479.60 268.24 L481.78 264.98 L484.08 261.72 L486.52 258.46 L489.08 255.20 L491.76 251.94 L494.57 248.68 L497.51 245.42 L500.57 242.16 L503.75 238.90 L507.05 235.64 L510.47 232.38 L514.01 229.12 L517.67 225.86 L521.45 222.60 L525.34 219.34 L529.35 216.08 L533.47 212.82 L537.70 209.56 L542.04 206.30 L546.50 203.04 L551.06 199.78 L555.73 196.52 L560.50 193.26 L565.38 190.00 L570.36 186.74 L575.44 183.48 L580.62 180.22 L585.90 176.96 L591.28 173.70 L596.75 170.44 L602.31 167.18 L607.97 163.92 L613.71 160.66 L619.54 157.40 L625.46 154.14 L631.46 150.88 L637.55 147.62 L643.71 144.36 L649.96 141.10 L656.28 137.84 L662.67 134.58 L669.14 131.32 L675.68 128.06 L682.29 124.80 L688.96 121.54 L695.70 118.28 L702.51 115.02 L709.37 111.76 L716.29 108.50 L723.27 105.24 L730.30 101.98 L737.39 98.72 L744.52 95.46 L751.71 92.20 L758.94 88.94 L766.21 85.68 L773.52 82.42 L780.88 79.16 L788.27 75.90 L795.69 72.64 L803.15 69.38 L810.64 66.12 L818.15 62.86 L825.69 59.60 L833.26 56.34 L840.84 53.08 L848.45 49.82 L856.07 46.56 L863.70 43.30 L871.35 40.04 L879.00 36.78 L886.66 33.52 L894.33 30.26 L902.00 27.00" stroke="#6e6e6e" stroke-width="2.3" stroke-dasharray="2.3 3.2" fill="none"/>
<path d="M902.00 613.80 L893.48 610.54 L884.96 607.28 L876.45 604.02 L867.94 600.76 L859.45 597.50 L850.96 594.24 L842.50 590.98 L834.05 587.72 L825.62 584.46 L817.22 581.20 L808.84 577.94 L800.49 574.68 L792.17 571.42 L783.88 568.16 L775.63 564.90 L767.42 561.64 L759.25 558.38 L751.12 555.12 L743.04 551.86 L735.01 548.60 L727.03 545.34 L719.10 542.08 L711.23 538.82 L703.41 535.56 L695.66 532.30 L687.97 529.04 L680.34 525.78 L672.78 522.52 L665.29 519.26 L657.88 516.00 L650.53 512.74 L643.27 509.48 L636.08 506.22 L628.97 502.96 L621.95 499.70 L615.01 496.44 L608.16 493.18 L601.40 489.92 L594.73 486.66 L588.16 483.40 L581.68 480.14 L575.30 476.88 L569.01 473.62 L562.83 470.36 L556.76 467.10 L550.78 463.84 L544.92 460.58 L539.16 457.32 L533.51 454.06 L527.98 450.80 L522.56 447.54 L517.25 444.28 L512.07 441.02 L507.00 437.76 L502.05 434.50 L497.22 431.24 L492.52 427.98 L487.94 424.72 L483.49 421.46 L479.16 418.20 L474.97 414.94 L470.90 411.68 L466.97 408.42 L463.16 405.16 L459.50 401.90 L455.96 398.64 L452.56 395.38 L449.30 392.12 L446.18 388.86 L443.20 385.60 L440.35 382.34 L437.65 379.08 L435.08 375.82 L432.66 372.56 L430.39 369.30 L428.25 366.04 L426.26 362.78 L424.42 359.52 L422.72 356.26 L421.17 353.00 L419.76 349.74 L418.50 346.48 L417.39 343.22 L416.42 339.96 L415.61 336.70 L414.94 333.44 L414.42 330.18 L414.05 326.92 L413.82 323.66 L413.75 320.40 L413.82 317.14 L414.05 313.88 L414.42 310.62 L414.94 307.36 L415.61 304.10 L416.42 300.84 L417.39 297.58 L418.50 294.32 L419.76 291.06 L421.17 287.80 L422.72 284.54 L424.42 281.28 L426.26 278.02 L428.25 274.76 L430.39 271.50 L432.66 268.24 L435.08 264.98 L437.65 261.72 L440.35 258.46 L443.20 255.20 L446.18 251.94 L449.30 248.68 L452.56 245.42 L455.96 242.16 L459.50 238.90 L463.16 235.64 L466.97 232.38 L470.90 229.12 L474.97 225.86 L479.16 222.60 L483.49 219.34 L487.94 216.08 L492.52 212.82 L497.22 209.56 L502.05 206.30 L507.00 203.04 L512.07 199.78 L517.25 196.52 L522.56 193.26 L527.98 190.00 L533.51 186.74 L539.16 183.48 L544.92 180.22 L550.78 176.96 L556.76 173.70 L562.83 170.44 L569.01 167.18 L575.30 163.92 L581.68 160.66 L588.16 157.40 L594.73 154.14 L601.40 150.88 L608.16 147.62 L615.01 144.36 L621.95 141.10 L628.97 137.84 L636.08 134.58 L643.27 131.32 L650.53 128.06 L657.88 124.80 L665.29 121.54 L672.78 118.28 L680.34 115.02 L687.97 111.76 L695.66 108.50 L703.41 105.24 L711.23 101.98 L719.10 98.72 L727.03 95.46 L735.01 92.20 L743.04 88.94 L751.12 85.68 L759.25 82.42 L767.42 79.16 L775.63 75.90 L783.88 72.64 L792.17 69.38 L800.49 66.12 L808.84 62.86 L817.22 59.60 L825.62 56.34 L834.05 53.08 L842.50 49.82 L850.96 46.56 L859.45 43.30 L867.94 40.04 L876.45 36.78 L884.96 33.52 L893.48 30.26 L902.00 27.00" stroke="#6e6e6e" stroke-width="2.3" stroke-dasharray="2.3 3.2" fill="none"/>
<path d="M902.00 613.80 L892.63 610.54 L883.26 607.28 L873.89 604.02 L864.54 600.76 L855.19 597.50 L845.86 594.24 L836.55 590.98 L827.25 587.72 L817.98 584.46 L808.74 581.20 L799.52 577.94 L790.34 574.68 L781.18 571.42 L772.07 568.16 L762.99 564.90 L753.96 561.64 L744.97 558.38 L736.03 555.12 L727.15 551.86 L718.31 548.60 L709.53 545.34 L700.81 542.08 L692.15 538.82 L683.55 535.56 L675.02 532.30 L666.56 529.04 L658.17 525.78 L649.86 522.52 L641.62 519.26 L633.46 516.00 L625.39 512.74 L617.39 509.48 L609.49 506.22 L601.67 502.96 L593.95 499.70 L586.32 496.44 L578.78 493.18 L571.34 489.92 L564.01 486.66 L556.77 483.40 L549.65 480.14 L542.63 476.88 L535.72 473.62 L528.92 470.36 L522.23 467.10 L515.66 463.84 L509.21 460.58 L502.88 457.32 L496.66 454.06 L490.58 450.80 L484.61 447.54 L478.78 444.28 L473.07 441.02 L467.50 437.76 L462.05 434.50 L456.74 431.24 L451.57 427.98 L446.53 424.72 L441.64 421.46 L436.88 418.20 L432.26 414.94 L427.79 411.68 L423.46 408.42 L419.28 405.16 L415.24 401.90 L411.36 398.64 L407.62 395.38 L404.03 392.12 L400.60 388.86 L397.31 385.60 L394.19 382.34 L391.21 379.08 L388.39 375.82 L385.73 372.56 L383.23 369.30 L380.88 366.04 L378.69 362.78 L376.66 359.52 L374.79 356.26 L373.08 353.00 L371.54 349.74 L370.15 346.48 L368.93 343.22 L367.87 339.96 L366.97 336.70 L366.23 333.44 L365.66 330.18 L365.25 326.92 L365.01 323.66 L364.93 320.40 L365.01 317.14 L365.25 313.88 L365.66 310.62 L366.23 307.36 L366.97 304.10 L367.87 300.84 L368.93 297.58 L370.15 294.32 L371.54 291.06 L373.08 287.80 L374.79 284.54 L376.66 281.28 L378.69 278.02 L380.88 274.76 L383.23 271.50 L385.73 268.24 L388.39 264.98 L391.21 261.72 L394.19 258.46 L397.31 255.20 L400.60 251.94 L404.03 248.68 L407.62 245.42 L411.36 242.16 L415.24 238.90 L419.28 235.64 L423.46 232.38 L427.79 229.12 L432.26 225.86 L436.88 222.60 L441.64 219.34 L446.53 216.08 L451.57 212.82 L456.74 209.56 L462.05 206.30 L467.50 203.04 L473.07 199.78 L478.78 196.52 L484.61 193.26 L490.58 190.00 L496.66 186.74 L502.88 183.48 L509.21 180.22 L515.66 176.96 L522.23 173.70 L528.92 170.44 L535.72 167.18 L542.63 163.92 L549.65 160.66 L556.77 157.40 L564.01 154.14 L571.34 150.88 L578.78 147.62 L586.32 144.36 L593.95 141.10 L601.67 137.84 L609.49 134.58 L617.39 131.32 L625.39 128.06 L633.46 124.80 L641.62 121.54 L649.86 118.28 L658.17 115.02 L666.56 111.76 L675.02 108.50 L683.55 105.24 L692.15 101.98 L700.81 98.72 L709.53 95.46 L718.31 92.20 L727.15 88.94 L736.03 85.68 L744.97 82.42 L753.96 79.16 L762.99 75.90 L772.07 72.64 L781.18 69.38 L790.34 66.12 L799.52 62.86 L808.74 59.60 L817.98 56.34 L827.25 53.08 L836.55 49.82 L845.86 46.56 L855.19 43.30 L864.54 40.04 L873.89 36.78 L883.26 33.52 L892.63 30.26 L902.00 27.00" stroke="#6e6e6e" stroke-width="2.3" stroke-dasharray="2.3 3.2" fill="none"/>
<path d="M902.00 613.80 L891.77 610.54 L881.55 607.28 L871.34 604.02 L861.13 600.76 L850.94 597.50 L840.76 594.24 L830.60 590.98 L820.46 587.72 L810.35 584.46 L800.26 581.20 L790.21 577.94 L780.18 574.68 L770.20 571.42 L760.26 568.16 L750.36 564.90 L740.50 561.64 L730.70 558.38 L720.95 555.12 L711.25 551.86 L701.61 548.60 L692.03 545.34 L682.52 542.08 L673.07 538.82 L663.69 535.56 L654.39 532.30 L645.16 529.04 L636.01 525.78 L626.94 522.52 L617.95 519.26 L609.05 516.00 L600.24 512.74 L591.52 509.48 L582.90 506.22 L574.37 502.96 L565.94 499.70 L557.62 496.44 L549.40 493.18 L541.28 489.92 L533.28 486.66 L525.39 483.40 L517.62 480.14 L509.96 476.88 L502.42 473.62 L495.00 470.36 L487.71 467.10 L480.54 463.84 L473.50 460.58 L466.59 457.32 L459.82 454.06 L453.17 450.80 L446.67 447.54 L440.30 444.28 L434.08 441.02 L428.00 437.76 L422.06 434.50 L416.27 431.24 L410.62 427.98 L405.13 424.72 L399.79 421.46 L394.60 418.20 L389.56 414.94 L384.68 411.68 L379.96 408.42 L375.40 405.16 L370.99 401.90 L366.75 398.64 L362.68 395.38 L358.76 392.12 L355.02 388.86 L351.43 385.60 L348.02 382.34 L344.78 379.08 L341.70 375.82 L338.80 372.56 L336.06 369.30 L333.50 366.04 L331.12 362.78 L328.90 359.52 L326.86 356.26 L325.00 353.00 L323.31 349.74 L321.80 346.48 L320.47 343.22 L319.31 339.96 L318.33 336.70 L317.53 333.44 L316.90 330.18 L316.46 326.92 L316.19 323.66 L316.10 320.40 L316.19 317.14 L316.46 313.88 L316.90 310.62 L317.53 307.36 L318.33 304.10 L319.31 300.84 L320.47 297.58 L321.80 294.32 L323.31 291.06 L325.00 287.80 L326.86 284.54 L328.90 281.28 L331.12 278.02 L333.50 274.76 L336.06 271.50 L338.80 268.24 L341.70 264.98 L344.78 261.72 L348.02 258.46 L351.43 255.20 L355.02 251.94 L358.76 248.68 L362.68 245.42 L366.75 242.16 L370.99 238.90 L375.40 235.64 L379.96 232.38 L384.68 229.12 L389.56 225.86 L394.60 222.60 L399.79 219.34 L405.13 216.08 L410.62 212.82 L416.27 209.56 L422.06 206.30 L428.00 203.04 L434.08 199.78 L440.30 196.52 L446.67 193.26 L453.17 190.00 L459.82 186.74 L466.59 183.48 L473.50 180.22 L480.54 176.96 L487.71 173.70 L495.00 170.44 L502.42 167.18 L509.96 163.92 L517.62 160.66 L525.39 157.40 L533.28 154.14 L541.28 150.88 L549.40 147.62 L557.62 144.36 L565.94 141.10 L574.37 137.84 L582.90 134.58 L591.52 131.32 L600.24 128.06 L609.05 124.80 L617.95 121.54 L626.94 118.28 L636.01 115.02 L645.16 111.76 L654.39 108.50 L663.69 105.24 L673.07 101.98 L682.52 98.72 L692.03 95.46 L701.61 92.20 L711.25 88.94 L720.95 85.68 L730.70 82.42 L740.50 79.16 L750.36 75.90 L760.26 72.64 L770.20 69.38 L780.18 66.12 L790.21 62.86 L800.26 59.60 L810.35 56.34 L820.46 53.08 L830.60 49.82 L840.76 46.56 L850.94 43.30 L861.13 40.04 L871.34 36.78 L881.55 33.52 L891.77 30.26 L902.00 27.00" stroke="#6e6e6e" stroke-width="2.3" stroke-dasharray="2.3 3.2" fill="none"/>
<path d="M318.0 323.0 L331.0 324.0 L366.7 330.0 L415.6 335.6 L464.4 342.2 L513.3 346.7 L564.4 349.5 L598.0 350.0" stroke="#5a5a5a" stroke-width="1.1" stroke-dasharray="1.2 2.5" fill="none"/>
<path d="M529.5 266.0 L530.9 261.3 L536.7 249.7 L541.6 235.9 L550.4 219.9 L558.9 207.7 L568.5 193.4 L577.1 181.8 L587.3 171.7 L596.0 163.0 L606.0 154.3 L615.6 143.9 L626.7 131.7 L638.9 122.8 L653.3 111.1 L666.0 105.0" stroke="#5a5a5a" stroke-width="1.1" stroke-dasharray="1.2 2.5" fill="none"/>
<path d="M633.6 267.4 L660.0 246.0 L687.7 227.7 L752.7 188.0 L806.9 162.7 L861.0 148.3 L893.5 143.6 L933.2 148.3 L976.5 162.7 L1023.5 188.0 L1063.0 213.3 L1087.0 235.0" stroke="#5a5a5a" stroke-width="1.1" stroke-dasharray="1.2 2.5" fill="none"/>
<path d="M1127.0 103.0 L1105.0 99.0 L1081.0 101.0 L1093.0 137.6 L1110.0 167.0 L1132.0 211.0" stroke="#5a5a5a" stroke-width="1.1" stroke-dasharray="1.2 2.5" fill="none"/>
<text transform="translate(902.7 25.0) scale(1.08 1)" fill="#8a8a8a" font-size="10.6" text-anchor="middle">+90<tspan font-size="5.5" dy="-5" dx="2.2">o</tspan></text>
<text transform="translate(902.7 122.8) scale(1.08 1)" fill="#8a8a8a" font-size="10.6" text-anchor="middle">+60<tspan font-size="5.5" dy="-5" dx="2.2">o</tspan></text>
<text transform="translate(902.7 220.5) scale(1.08 1)" fill="#8a8a8a" font-size="10.6" text-anchor="middle">+30<tspan font-size="5.5" dy="-5" dx="2.2">o</tspan></text>
<text transform="translate(902.7 427.8) scale(1.08 1)" fill="#8a8a8a" font-size="10.6" text-anchor="middle">−30<tspan font-size="5.5" dy="-5" dx="2.2">o</tspan></text>
<text transform="translate(902.7 525.5) scale(1.08 1)" fill="#8a8a8a" font-size="10.6" text-anchor="middle">−60<tspan font-size="5.5" dy="-5" dx="2.2">o</tspan></text>
<text transform="translate(902.7 623.7) scale(1.08 1)" fill="#8a8a8a" font-size="10.6" text-anchor="middle">−90<tspan font-size="5.5" dy="-5" dx="2.2">o</tspan></text>
<text transform="translate(1488.6 329.8) scale(1.08 1)" fill="#8a8a8a" font-size="10.6" text-anchor="middle">+180<tspan font-size="5.5" dy="-5" dx="2.2">o</tspan></text>
<text transform="translate(1391.0 329.8) scale(1.08 1)" fill="#8a8a8a" font-size="10.6" text-anchor="middle">+210<tspan font-size="5.5" dy="-5" dx="2.2">o</tspan></text>
<text transform="translate(1293.3 329.8) scale(1.08 1)" fill="#8a8a8a" font-size="10.6" text-anchor="middle">+240<tspan font-size="5.5" dy="-5" dx="2.2">o</tspan></text>
<text transform="translate(1195.7 329.8) scale(1.08 1)" fill="#8a8a8a" font-size="10.6" text-anchor="middle">+270<tspan font-size="5.5" dy="-5" dx="2.2">o</tspan></text>
<text transform="translate(1098.0 329.8) scale(1.08 1)" fill="#8a8a8a" font-size="10.6" text-anchor="middle">+300<tspan font-size="5.5" dy="-5" dx="2.2">o</tspan></text>
<text transform="translate(1000.4 329.8) scale(1.08 1)" fill="#8a8a8a" font-size="10.6" text-anchor="middle">+330<tspan font-size="5.5" dy="-5" dx="2.2">o</tspan></text>
<text transform="translate(902.7 329.8) scale(1.08 1)" fill="#8a8a8a" font-size="10.6" text-anchor="middle">+0<tspan font-size="5.5" dy="-5" dx="2.2">o</tspan></text>
<text transform="translate(805.1 329.8) scale(1.08 1)" fill="#8a8a8a" font-size="10.6" text-anchor="middle">+30<tspan font-size="5.5" dy="-5" dx="2.2">o</tspan></text>
<text transform="translate(707.4 329.8) scale(1.08 1)" fill="#8a8a8a" font-size="10.6" text-anchor="middle">+60<tspan font-size="5.5" dy="-5" dx="2.2">o</tspan></text>
<text transform="translate(609.8 329.8) scale(1.08 1)" fill="#8a8a8a" font-size="10.6" text-anchor="middle">+90<tspan font-size="5.5" dy="-5" dx="2.2">o</tspan></text>
<text transform="translate(512.1 329.8) scale(1.08 1)" fill="#8a8a8a" font-size="10.6" text-anchor="middle">+120<tspan font-size="5.5" dy="-5" dx="2.2">o</tspan></text>
<text transform="translate(414.4 329.8) scale(1.08 1)" fill="#8a8a8a" font-size="10.6" text-anchor="middle">+150<tspan font-size="5.5" dy="-5" dx="2.2">o</tspan></text>
<text transform="translate(316.8 329.8) scale(1.08 1)" fill="#8a8a8a" font-size="10.6" text-anchor="middle">+180<tspan font-size="5.5" dy="-5" dx="2.2">o</tspan></text>
<text class="mono" x="316" y="30.1" fill="#fff" font-size="13.9" letter-spacing="0.03" xml:space="preserve">UK004U</text>
<text class="mono" x="316" y="43.0" fill="#fff" font-size="13.9" letter-spacing="0.03" xml:space="preserve">Beg: 20251021 01:59:17 (sol = 207.58°)</text>
<text class="mono" x="316" y="56.6" fill="#fff" font-size="13.9" letter-spacing="0.03" xml:space="preserve">End: 20251021 04:05:07 (sol = 207.66°)</text>
<text class="mono" x="316" y="68.9" fill="#fff" font-size="13.9" letter-spacing="0.03" xml:space="preserve">--------------------------------------</text>
<text class="mono" x="316" y="81.7" fill="#fff" font-size="13.9" letter-spacing="0.03" xml:space="preserve">ORI: 8</text>
<text class="mono" x="316" y="94.6" fill="#fff" font-size="13.9" letter-spacing="0.03" xml:space="preserve">...: 3</text>
<ellipse cx="604" cy="268.3" rx="31.4" ry="18.7" transform="rotate(-38.5 604 268.3)" stroke="#2eb07f" stroke-width="1.9" fill="none"/>
<path d="M592.7 273.3 L575.3 281.0 L566.7 284.7" stroke="#2eb07f" stroke-width="1.3" stroke-dasharray="1.3 2" fill="none"/>
<path d="M566.7 284.7L558.7 288" stroke="#2eb07f" stroke-width="1.5" fill="none"/>
<circle cx="558.7" cy="288" r="1.15" fill="#f0703c"/>
<path d="M608.0 271.0 L616.7 281.0 L628.3 292.8 L652.9 316.0" stroke="#2eb07f" stroke-width="1.3" stroke-dasharray="1.3 2" fill="none"/>
<path d="M654.5 317.3L660.9 321.9" stroke="#2eb07f" stroke-width="1.5" fill="none"/>
<circle cx="660.9" cy="321.9" r="1.15" fill="#f0703c"/>
<path d="M610.3 271.0 L611.1 274.4 L612.7 283.0 L613.9 290.0" stroke="#2eb07f" stroke-width="1.3" stroke-dasharray="1.3 2" fill="none"/>
<circle cx="613.9" cy="290" r="1.15" fill="#f0703c"/>
<path d="M597.5 274.0 L595.0 285.0 L592.2 296.7 L590.0 308.9 L589.5 316.0" stroke="#2eb07f" stroke-width="1.3" stroke-dasharray="1.3 2" fill="none"/>
<path d="M590.3 319.4L590.9 326.9" stroke="#2eb07f" stroke-width="1.5" fill="none"/>
<circle cx="590.9" cy="326.9" r="1.15" fill="#f0703c"/>
<path d="M586.0 276.0 L582.6 291.7 L583.3 306.7 L586.1 322.2 L588.3 332.0 L591.7 341.1 L593.6 344.7" stroke="#2eb07f" stroke-width="1.3" stroke-dasharray="1.3 2" fill="none"/>
<path d="M593.6 344.7L595.8 349.1" stroke="#2eb07f" stroke-width="1.5" fill="none"/>
<circle cx="595.8" cy="349.1" r="1.15" fill="#f0703c"/>
<path d="M599.0 275.0 L596.0 290.0 L592.8 300.0 L590.0 315.0 L589.0 330.0 L590.5 345.0 L591.7 351.7" stroke="#2eb07f" stroke-width="1.3" stroke-dasharray="1.3 2" fill="none"/>
<path d="M591.7 351.7L593 357" stroke="#2eb07f" stroke-width="1.5" fill="none"/>
<circle cx="593" cy="357" r="1.15" fill="#f0703c"/>
<path d="M602.0 275.0 L601.0 292.0 L600.5 320.0 L603.0 335.0 L607.0 343.0 L610.6 348.3" stroke="#2eb07f" stroke-width="1.3" stroke-dasharray="1.3 2" fill="none"/>
<path d="M610.6 348.3L614.1 356.9" stroke="#2eb07f" stroke-width="1.5" fill="none"/>
<circle cx="614.1" cy="356.9" r="1.15" fill="#f0703c"/>
<path d="M600.0 275.0 L597.5 292.0 L597.5 320.0 L600.0 335.0 L605.0 350.0 L610.6 362.2" stroke="#2eb07f" stroke-width="1.3" stroke-dasharray="1.3 2" fill="none"/>
<path d="M610.6 362.2L612 365" stroke="#2eb07f" stroke-width="1.5" fill="none"/>
<circle cx="612" cy="365" r="1.15" fill="#f0703c"/>
<path d="M531 270.7L531 288.4" stroke="#9a9a9a" stroke-width="1.3" fill="none"/>
<path d="M588.3 318.9L595.3 310.6" stroke="#9a9a9a" stroke-width="1.3" fill="none"/>
<path d="M591.7 349.6L600 349.6" stroke="#9a9a9a" stroke-width="1.3" fill="none"/>
<path d="M582.10 273.30H588.50M585.30 270.10V276.50" stroke="#ff0000" stroke-width="1.6" fill="none"/>
<path d="M607.10 266.30H613.50M610.30 263.10V269.50" stroke="#ff0000" stroke-width="1.6" fill="none"/>
<circle cx="603.5" cy="270.3" r="2.6" fill="#ff0000"/>
<text x="603.3" y="271.7" fill="#fff" font-size="10" text-anchor="middle">ORI</text>
<path d="M75 641.4V842.4" stroke="#606060" stroke-width="2" stroke-dasharray="2 3.5" fill="none"/>
<path d="M219 641.4V842.4" stroke="#606060" stroke-width="2" stroke-dasharray="2 3.5" fill="none"/>
<path d="M365 641.4V842.4" stroke="#606060" stroke-width="2" stroke-dasharray="2 3.5" fill="none"/>
<path d="M506 641.4V842.4" stroke="#606060" stroke-width="2" stroke-dasharray="2 3.5" fill="none"/>
<path d="M651 641.4V842.4" stroke="#606060" stroke-width="2" stroke-dasharray="2 3.5" fill="none"/>
<path d="M797 641.4V842.4" stroke="#606060" stroke-width="2" stroke-dasharray="2 3.5" fill="none"/>
<path d="M940 641.4V842.4" stroke="#606060" stroke-width="2" stroke-dasharray="2 3.5" fill="none"/>
<path d="M1091 641.4V842.4" stroke="#606060" stroke-width="2" stroke-dasharray="2 3.5" fill="none"/>
<path d="M1239 641.4V842.4" stroke="#606060" stroke-width="2" stroke-dasharray="2 3.5" fill="none"/>
<path d="M1394 641.4V842.4" stroke="#606060" stroke-width="2" stroke-dasharray="2 3.5" fill="none"/>
<path d="M1547.5 641.4V842.4" stroke="#606060" stroke-width="2" stroke-dasharray="2 3.5" fill="none"/>
<path d="M1687 641.4V842.4" stroke="#606060" stroke-width="2" stroke-dasharray="2 3.5" fill="none"/>
<text transform="translate(149.00 696.90) rotate(-90) scale(0.2632 0.3000)" fill="#5a5a5a" stroke="#5a5a5a" stroke-width="1.6" font-size="100">APR</text>
<text transform="translate(295.00 701.47) rotate(-90) scale(0.2719 0.2971)" fill="#5a5a5a" stroke="#5a5a5a" stroke-width="1.6" font-size="100">MAY</text>
<text transform="translate(435.90 691.26) rotate(-90) scale(0.2597 0.2971)" fill="#5a5a5a" stroke="#5a5a5a" stroke-width="1.6" font-size="100">JUN</text>
<text transform="translate(577.70 685.55) rotate(-90) scale(0.2500 0.3029)" fill="#5a5a5a" stroke="#5a5a5a" stroke-width="1.6" font-size="100">JUL</text>
<text transform="translate(724.20 700.40) rotate(-90) scale(0.2657 0.2971)" fill="#5a5a5a" stroke="#5a5a5a" stroke-width="1.6" font-size="100">AUG</text>
<text transform="translate(872.10 694.21) rotate(-90) scale(0.2513 0.3100)" fill="#5a5a5a" stroke="#5a5a5a" stroke-width="1.6" font-size="100">SEP</text>
<text transform="translate(1017.60 701.10) rotate(-90) scale(0.2746 0.3114)" fill="#5a5a5a" stroke="#5a5a5a" stroke-width="1.6" font-size="100">OCT</text>
<text transform="translate(1170.60 705.43) rotate(-90) scale(0.2788 0.3114)" fill="#5a5a5a" stroke="#5a5a5a" stroke-width="1.6" font-size="100">NOV</text>
<text transform="translate(1319.80 700.94) rotate(-90) scale(0.2673 0.3129)" fill="#5a5a5a" stroke="#5a5a5a" stroke-width="1.6" font-size="100">DEC</text>
<text transform="translate(1469.40 689.26) rotate(-90) scale(0.2572 0.3014)" fill="#5a5a5a" stroke="#5a5a5a" stroke-width="1.6" font-size="100">JAN</text>
<text transform="translate(1628.30 696.16) rotate(-90) scale(0.2580 0.3014)" fill="#5a5a5a" stroke="#5a5a5a" stroke-width="1.6" font-size="100">FEB</text>
<text transform="translate(1766.10 705.19) rotate(-90) scale(0.2733 0.3014)" fill="#5a5a5a" stroke="#5a5a5a" stroke-width="1.6" font-size="100">MAR</text>
<clipPath id="axc"><rect x="20.2" y="641.95" width="1765" height="200"/></clipPath>
<path clip-path="url(#axc)" d="M1038.4 641.4V842.4" stroke="#ff0000" stroke-width="2" stroke-dasharray="3.5 3.6" stroke-dashoffset="1.55" stroke-linecap="round" fill="none"/>
<rect x="106" y="831.90" width="24" height="4.2" fill="#bddf26"/>
<rect x="165" y="831.90" width="180" height="4.2" fill="#bddf26"/>
<rect x="366" y="831.90" width="259" height="4.2" fill="#bddf26"/>
<rect x="636" y="831.90" width="151" height="4.2" fill="#bddf26"/>
<rect x="807" y="831.90" width="93" height="4.2" fill="#bddf26"/>
<rect x="920" y="831.90" width="53" height="4.2" fill="#bddf26"/>
<rect x="984" y="831.90" width="82" height="4.2" fill="#bddf26"/>
<rect x="1082" y="831.90" width="122" height="4.2" fill="#bddf26"/>
<rect x="1244" y="831.90" width="82" height="4.2" fill="#bddf26"/>
<rect x="1337" y="831.90" width="19" height="4.2" fill="#bddf26"/>
<rect x="1381" y="831.90" width="63" height="4.2" fill="#bddf26"/>
<rect x="1459" y="831.90" width="53" height="4.2" fill="#bddf26"/>
<rect x="1523" y="831.90" width="24" height="4.2" fill="#bddf26"/>
<rect x="1724" y="831.90" width="24" height="4.2" fill="#bddf26"/>
<rect x="1758" y="831.90" width="24" height="4.2" fill="#bddf26"/>
<rect x="165" y="815.57" width="24" height="4.2" fill="#86d549"/>
<rect x="224" y="815.57" width="63" height="4.2" fill="#86d549"/>
<rect x="312" y="815.57" width="29" height="4.2" fill="#86d549"/>
<rect x="366" y="815.57" width="127" height="4.2" fill="#86d549"/>
<rect x="508" y="815.57" width="146" height="4.2" fill="#86d549"/>
<rect x="704" y="815.57" width="34" height="4.2" fill="#86d549"/>
<rect x="773" y="815.57" width="73" height="4.2" fill="#86d549"/>
<rect x="871" y="815.57" width="117" height="4.2" fill="#86d549"/>
<rect x="1003" y="815.57" width="14" height="4.2" fill="#86d549"/>
<rect x="1062" y="815.57" width="151" height="4.2" fill="#86d549"/>
<rect x="1244" y="815.57" width="23" height="4.2" fill="#86d549"/>
<rect x="1293" y="815.57" width="23" height="4.2" fill="#86d549"/>
<rect x="1342" y="815.57" width="23" height="4.2" fill="#86d549"/>
<rect x="1386" y="815.57" width="43" height="4.2" fill="#86d549"/>
<rect x="1459" y="815.57" width="24" height="4.2" fill="#86d549"/>
<rect x="1548" y="815.57" width="23" height="4.2" fill="#86d549"/>
<rect x="165" y="799.24" width="24" height="4.2" fill="#54c568"/>
<rect x="258" y="799.24" width="230" height="4.2" fill="#54c568"/>
<rect x="508" y="799.24" width="107" height="4.2" fill="#54c568"/>
<rect x="626" y="799.24" width="92" height="4.2" fill="#54c568"/>
<rect x="729" y="799.24" width="97" height="4.2" fill="#54c568"/>
<rect x="949" y="799.24" width="201" height="4.2" fill="#54c568"/>
<rect x="1160" y="799.24" width="88" height="4.2" fill="#54c568"/>
<rect x="1258" y="799.24" width="186" height="4.2" fill="#54c568"/>
<rect x="1459" y="799.24" width="24" height="4.2" fill="#54c568"/>
<rect x="1553" y="799.24" width="23" height="4.2" fill="#54c568"/>
<rect x="194" y="782.91" width="24" height="4.2" fill="#2fb47c"/>
<rect x="322" y="782.91" width="185" height="4.2" fill="#2fb47c"/>
<rect x="518" y="782.91" width="24" height="4.2" fill="#2fb47c"/>
<rect x="557" y="782.91" width="127" height="4.2" fill="#2fb47c"/>
<rect x="807" y="782.91" width="24" height="4.2" fill="#2fb47c"/>
<rect x="954" y="782.91" width="19" height="4.2" fill="#2fb47c"/>
<rect x="989" y="782.91" width="136" height="4.2" fill="#2fb47c"/>
<rect x="1155" y="782.91" width="63" height="4.2" fill="#2fb47c"/>
<rect x="1244" y="782.91" width="23" height="4.2" fill="#2fb47c"/>
<rect x="1317" y="782.91" width="24" height="4.2" fill="#2fb47c"/>
<rect x="1396" y="782.91" width="23" height="4.2" fill="#2fb47c"/>
<rect x="1464" y="782.91" width="186" height="4.2" fill="#2fb47c"/>
<rect x="341" y="766.58" width="29" height="4.2" fill="#20a486"/>
<rect x="410" y="766.58" width="38" height="4.2" fill="#20a486"/>
<rect x="469" y="766.58" width="24" height="4.2" fill="#20a486"/>
<rect x="528" y="766.58" width="18" height="4.2" fill="#20a486"/>
<rect x="562" y="766.58" width="29" height="4.2" fill="#20a486"/>
<rect x="616" y="766.58" width="33" height="4.2" fill="#20a486"/>
<rect x="959" y="766.58" width="29" height="4.2" fill="#20a486"/>
<rect x="1062" y="766.58" width="24" height="4.2" fill="#20a486"/>
<rect x="1101" y="766.58" width="24" height="4.2" fill="#20a486"/>
<rect x="1160" y="766.58" width="34" height="4.2" fill="#20a486"/>
<rect x="1249" y="766.58" width="23" height="4.2" fill="#20a486"/>
<rect x="1425" y="766.58" width="87" height="4.2" fill="#20a486"/>
<rect x="420" y="750.25" width="24" height="4.2" fill="#228c8d"/>
<rect x="533" y="750.25" width="23" height="4.2" fill="#228c8d"/>
<rect x="567" y="750.25" width="24" height="4.2" fill="#228c8d"/>
<rect x="621" y="750.25" width="122" height="4.2" fill="#228c8d"/>
<rect x="969" y="750.25" width="166" height="4.2" fill="#228c8d"/>
<rect x="1185" y="750.25" width="161" height="4.2" fill="#228c8d"/>
<rect x="1469" y="750.25" width="24" height="4.2" fill="#228c8d"/>
<rect x="430" y="733.92" width="23" height="4.2" fill="#2c728e"/>
<rect x="577" y="733.92" width="156" height="4.2" fill="#2c728e"/>
<rect x="994" y="733.92" width="111" height="4.2" fill="#2c728e"/>
<rect x="1116" y="733.92" width="107" height="4.2" fill="#2c728e"/>
<rect x="1263" y="733.92" width="29" height="4.2" fill="#2c728e"/>
<rect x="1489" y="733.92" width="23" height="4.2" fill="#2c728e"/>
<rect x="592" y="717.59" width="23" height="4.2" fill="#3b528b"/>
<rect x="655" y="717.59" width="117" height="4.2" fill="#3b528b"/>
<rect x="1072" y="717.59" width="171" height="4.2" fill="#3b528b"/>
<rect x="1263" y="717.59" width="24" height="4.2" fill="#3b528b"/>
<rect x="596" y="701.26" width="137" height="4.2" fill="#453781"/>
<rect x="1092" y="701.26" width="28" height="4.2" fill="#453781"/>
<rect x="1200" y="701.26" width="23" height="4.2" fill="#453781"/>
<rect x="1273" y="701.26" width="53" height="4.2" fill="#453781"/>
<rect x="1111" y="684.93" width="24" height="4.2" fill="#482576"/>
<path d="M114.00 834.30H122.00M118.00 830.30V838.10M241.00 834.30H249.00M245.00 830.30V838.10M510.50 834.30H518.50M514.50 830.30V838.10M706.75 834.30H714.75M710.75 830.30V838.10M833.80 834.30H841.80M837.80 830.30V838.10M961.75 834.30H969.75M965.75 830.30V838.10M986.50 834.30H994.50M990.50 830.30V838.10M1116.50 834.30H1124.50M1120.50 830.30V838.10M1296.00 834.30H1304.00M1300.00 830.30V838.10M1341.50 834.30H1349.50M1345.50 830.30V838.10M1413.00 834.30H1421.00M1417.00 830.30V838.10M1481.75 834.30H1489.75M1485.75 830.30V838.10M1530.50 834.30H1538.50M1534.50 830.30V838.10M1731.75 834.30H1739.75M1735.75 830.30V838.10M1766.00 834.30H1774.00M1770.00 830.30V838.10M173.00 817.97H181.00M177.00 813.97V821.77M256.00 817.97H264.00M260.00 813.97V821.77M323.50 817.97H331.50M327.50 813.97V821.77M438.00 817.97H446.00M442.00 813.97V821.77M599.00 817.97H607.00M603.00 813.97V821.77M716.75 817.97H724.75M720.75 813.97V821.77M793.50 817.97H801.50M797.50 813.97V821.77M939.80 817.97H947.80M943.80 813.97V821.77M1005.50 817.97H1013.50M1009.50 813.97V821.77M1152.75 817.97H1160.75M1156.75 813.97V821.77M1250.50 817.97H1258.50M1254.50 813.97V821.77M1300.00 817.97H1308.00M1304.00 813.97V821.77M1349.75 817.97H1357.75M1353.75 813.97V821.77M1402.75 817.97H1410.75M1406.75 813.97V821.77M1466.75 817.97H1474.75M1470.75 813.97V821.77M1555.00 817.97H1563.00M1559.00 813.97V821.77M175.00 801.64H183.00M179.00 797.64V805.44M378.50 801.64H386.50M382.50 797.64V805.44M544.75 801.64H552.75M548.75 797.64V805.44M682.75 801.64H690.75M686.75 797.64V805.44M741.50 801.64H749.50M745.50 797.64V805.44M1074.75 801.64H1082.75M1078.75 797.64V805.44M1217.00 801.64H1225.00M1221.00 797.64V805.44M1305.00 801.64H1313.00M1309.00 797.64V805.44M1466.75 801.64H1474.75M1470.75 797.64V805.44M1560.00 801.64H1568.00M1564.00 797.64V805.44M202.00 785.31H210.00M206.00 781.31V789.11M400.50 785.31H408.50M404.50 781.31V789.11M525.50 785.31H533.50M529.50 781.31V789.11M638.75 785.31H646.75M642.75 781.31V789.11M814.75 785.31H822.75M818.75 781.31V789.11M959.75 785.31H967.75M963.75 781.31V789.11M1041.00 785.31H1049.00M1045.00 781.31V789.11M1188.00 785.31H1196.00M1192.00 781.31V789.11M1250.75 785.31H1258.75M1254.75 781.31V789.11M1325.00 785.31H1333.00M1329.00 781.31V789.11M1402.75 785.31H1410.75M1406.75 781.31V789.11M1545.50 785.31H1553.50M1549.50 781.31V789.11M356.00 768.98H364.00M360.00 764.98V772.78M426.50 768.98H434.50M430.50 764.98V772.78M476.75 768.98H484.75M480.75 764.98V772.78M535.50 768.98H543.50M539.50 764.98V772.78M571.00 768.98H579.00M575.00 764.98V772.78M630.50 768.98H638.50M634.50 764.98V772.78M973.75 768.98H981.75M977.75 764.98V772.78M1069.75 768.98H1077.75M1073.75 764.98V772.78M1108.75 768.98H1116.75M1112.75 764.98V772.78M1177.75 768.98H1185.75M1181.75 764.98V772.78M1256.00 768.98H1264.00M1260.00 764.98V772.78M1466.75 768.98H1474.75M1470.75 764.98V772.78M427.50 752.65H435.50M431.50 748.65V756.45M539.75 752.65H547.75M543.75 748.65V756.45M574.75 752.65H582.75M578.75 748.65V756.45M703.75 752.65H711.75M707.75 748.65V756.45M1095.00 752.65H1103.00M1099.00 748.65V756.45M1271.00 752.65H1279.00M1275.00 748.65V756.45M1476.75 752.65H1484.75M1480.75 748.65V756.45M437.50 736.32H445.50M441.50 732.32V740.12M630.75 736.32H638.75M634.75 732.32V740.12M1038.75 736.32H1046.75M1042.75 732.32V740.12M1167.75 736.32H1175.75M1171.75 732.32V740.12M1275.00 736.32H1283.00M1279.00 732.32V740.12M1496.75 736.32H1504.75M1500.75 732.32V740.12M598.75 719.99H606.75M602.75 715.99V723.79M726.75 719.99H734.75M730.75 715.99V723.79M1188.00 719.99H1196.00M1192.00 715.99V723.79M1271.00 719.99H1279.00M1275.00 715.99V723.79M688.00 703.66H696.00M692.00 699.66V707.46M1102.00 703.66H1110.00M1106.00 699.66V707.46M1207.00 703.66H1215.00M1211.00 699.66V707.46M1300.00 703.66H1308.00M1304.00 699.66V707.46M1118.50 687.33H1126.50M1122.50 683.33V691.13" stroke="#fff" stroke-width="2.2" fill="none"/>
<g fill="#fff" font-size="10.5" text-anchor="middle"><text x="117.00" y="832.00">KSE</text><text x="254.60" y="832.00">ETA</text><text x="495.25" y="832.00">NZC</text><text x="710.70" y="832.00">NDA</text><text x="853.70" y="832.00">SPE</text><text x="946.30" y="832.00">ARD</text><text x="1024.70" y="832.00">EGE</text><text x="1142.40" y="832.00">NTA</text><text x="1284.70" y="832.00">MON</text><text x="1343.40" y="832.00">URS</text><text x="1412.10" y="832.00">AHY</text><text x="1485.60" y="832.00">GUM</text><text x="1535.40" y="832.00">OHY</text><text x="1736.25" y="832.00">XHE</text><text x="1769.40" y="832.00">EVI</text><text x="176.20" y="815.67">AVB</text><text x="254.80" y="815.67">ELY</text><text x="323.80" y="815.67">CAM</text><text x="431.70" y="815.67">SSG</text><text x="578.40" y="815.67">PCA</text><text x="720.30" y="815.67">AUD</text><text x="809.30" y="815.67">AUR</text><text x="931.00" y="815.67">DSX</text><text x="1010.80" y="815.67">OCU</text><text x="1138.30" y="815.67">OER</text><text x="1254.80" y="815.67">DKD</text><text x="1304.00" y="815.67">DSV</text><text x="1353.00" y="815.67">ALY</text><text x="1407.50" y="815.67">JLE</text><text x="1471.90" y="815.67">SCC</text><text x="1558.80" y="815.67">FEV</text><text x="176.20" y="799.34">LYR</text><text x="372.50" y="799.34">JMC</text><text x="559.00" y="799.34">JPE</text><text x="671.25" y="799.34">PAU</text><text x="774.20" y="799.34">NIA</text><text x="1050.00" y="799.34">STA</text><text x="1206.30" y="799.34">NOO</text><text x="1353.50" y="799.34">COM</text><text x="1470.50" y="799.34">NCC</text><text x="1564.40" y="799.34">FED</text><text x="206.20" y="783.01">HVI</text><text x="411.90" y="783.01">ARI</text><text x="529.80" y="783.01">SZC</text><text x="618.50" y="783.01">CAP</text><text x="818.30" y="783.01">NUE</text><text x="960.90" y="783.01">OCT</text><text x="1059.40" y="783.01">ORI</text><text x="1186.60" y="783.01">AMO</text><text x="1255.10" y="783.01">DPC</text><text x="1329.30" y="783.01">XVI</text><text x="1407.70" y="783.01">QUA</text><text x="1559.25" y="783.01">AAN</text><text x="353.10" y="766.68">TAH</text><text x="431.50" y="766.68">JEA</text><text x="481.00" y="766.68">JIP</text><text x="538.70" y="766.68">PPS</text><text x="578.60" y="766.68">ZCS</text><text x="632.75" y="766.68">GDR</text><text x="971.30" y="766.68">DRA</text><text x="1073.10" y="766.68">LUM</text><text x="1112.90" y="766.68">RPU</text><text x="1177.40" y="766.68">THA</text><text x="1259.40" y="766.68">PSU</text><text x="1470.70" y="766.68">XCB</text><text x="431.70" y="750.35">JRC</text><text x="544.20" y="750.35">CAN</text><text x="578.20" y="750.35">FAN</text><text x="681.10" y="750.35">PER</text><text x="1050.00" y="750.35">CTA</text><text x="1265.40" y="750.35">HYD</text><text x="1481.10" y="750.35">XUM</text><text x="441.60" y="734.02">COR</text><text x="658.00" y="734.02">SDA</text><text x="1049.20" y="734.02">LMI</text><text x="1166.60" y="734.02">LEO</text><text x="1274.80" y="734.02">EHY</text><text x="1500.80" y="734.02">ECV</text><text x="603.60" y="717.69">JXA</text><text x="715.90" y="717.69">KCG</text><text x="1156.70" y="717.69">AND</text><text x="1274.80" y="717.69">DAD</text><text x="666.40" y="701.36">ERI</text><text x="1108.60" y="701.36">SLD</text><text x="1211.40" y="701.36">ORS</text><text x="1300.00" y="701.36">GEM</text><text x="1122.90" y="685.03">KUM</text></g>
<rect x="20.2" y="641.4" width="1765.3" height="201.0" stroke="#fff" stroke-width="1.1" fill="none"/>
<path d="M20.20 842.4V847.6M265.35 842.4V847.6M510.50 842.4V847.6M755.65 842.4V847.6M1000.80 842.4V847.6M1245.95 842.4V847.6M1491.10 842.4V847.6M1736.25 842.4V847.6" stroke="#fff" stroke-width="1.1" fill="none"/>
<text transform="translate(20.40 862) scale(1.07 1)" fill="#fff" font-size="13.9" text-anchor="middle">0</text>
<text transform="translate(264.15 862) scale(1.07 1)" fill="#fff" font-size="13.9" text-anchor="middle">50</text>
<text transform="translate(510.90 862) scale(1.07 1)" fill="#fff" font-size="13.9" text-anchor="middle">100</text>
<text transform="translate(756.05 862) scale(1.07 1)" fill="#fff" font-size="13.9" text-anchor="middle">150</text>
<text transform="translate(999.80 862) scale(1.07 1)" fill="#fff" font-size="13.9" text-anchor="middle">200</text>
<text transform="translate(1244.95 862) scale(1.07 1)" fill="#fff" font-size="13.9" text-anchor="middle">250</text>
<text transform="translate(1490.10 862) scale(1.07 1)" fill="#fff" font-size="13.9" text-anchor="middle">300</text>
<text transform="translate(1735.25 862) scale(1.07 1)" fill="#fff" font-size="13.9" text-anchor="middle">350</text>
<text transform="translate(902.4 882) scale(1.14 1)" x="0" y="0" fill="#fff" font-size="13.9" text-anchor="middle">Solar longitude (deg)</text>
</svg></body></html>
